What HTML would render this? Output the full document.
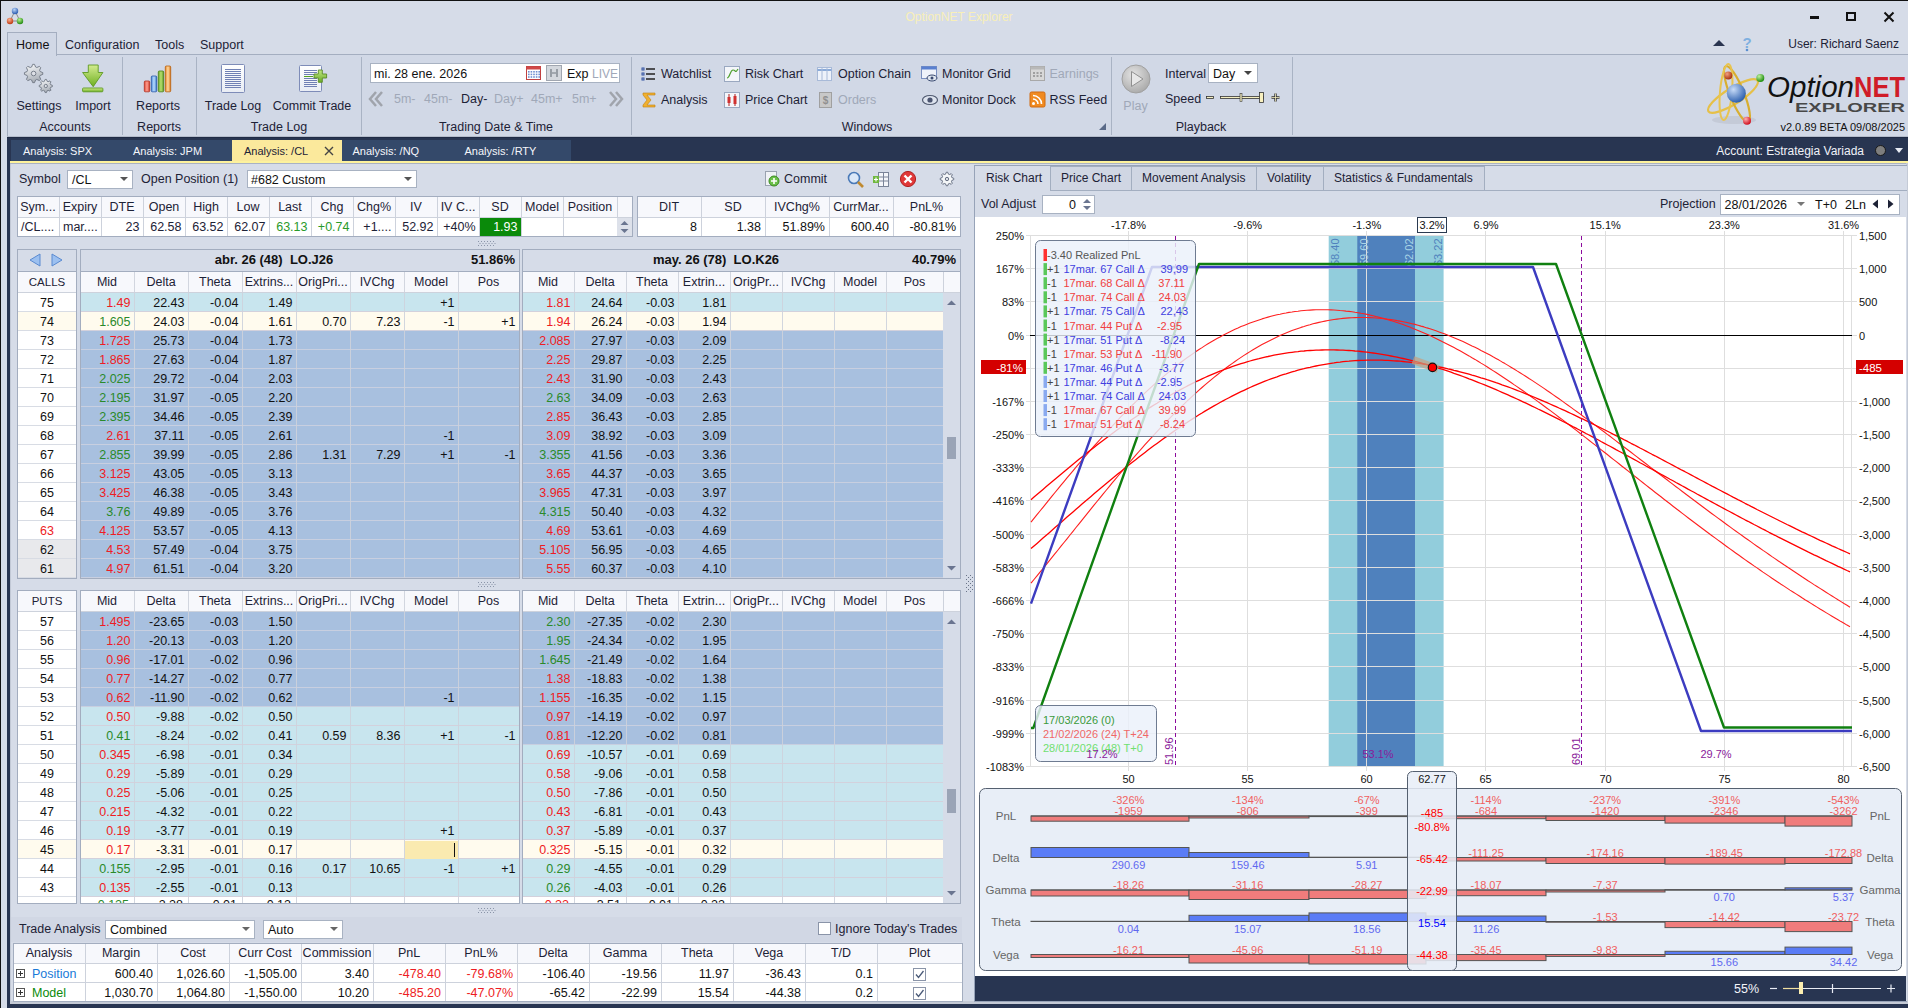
<!DOCTYPE html><html><head><meta charset="utf-8"><style>
html,body{margin:0;padding:0;}
body{width:1908px;height:1008px;position:relative;overflow:hidden;background:#d6dce8;font-family:"Liberation Sans", sans-serif;color:#1d2236;font-size:12px;}
div{position:absolute;box-sizing:border-box;}
.t{white-space:nowrap;}
svg{position:absolute;overflow:visible;}
</style></head><body>
<div style="left:0px;top:0px;width:1908px;height:1px;background:#111"></div>
<div style="left:0px;top:0px;width:1px;height:1008px;background:#111"></div>
<div class="t" style="left:809.0px;top:9.0px;width:300px;height:16px;line-height:16px;text-align:center;color:#f8efb8;font-size:12px">OptionNET Explorer</div>
<svg style="left:0;top:0" width="40" height="40">
<line x1="15" y1="11" x2="10" y2="21" stroke="#888" stroke-width="1"/><line x1="15" y1="11" x2="20" y2="21" stroke="#888" stroke-width="1"/><line x1="10" y1="21" x2="20" y2="21" stroke="#888" stroke-width="1"/>
<defs><radialGradient id="ib" cx="0.4" cy="0.3" r="0.7"><stop offset="0" stop-color="#b8d4f8"/><stop offset="1" stop-color="#2a5ab0"/></radialGradient><radialGradient id="ir" cx="0.4" cy="0.3" r="0.7"><stop offset="0" stop-color="#f8b090"/><stop offset="1" stop-color="#c03810"/></radialGradient><radialGradient id="ig" cx="0.4" cy="0.3" r="0.7"><stop offset="0" stop-color="#b8f090"/><stop offset="1" stop-color="#208a10"/></radialGradient></defs>
<circle cx="15" cy="11" r="3.2" fill="url(#ib)"/><circle cx="10" cy="21" r="3.2" fill="url(#ir)"/><circle cx="20" cy="21" r="3.2" fill="url(#ig)"/></svg>
<div style="left:1810px;top:16px;width:9px;height:3px;background:#111"></div>
<div style="left:1846px;top:12px;width:10px;height:9px;border:2px solid #111"></div>
<svg style="left:1880px;top:8px" width="18" height="18"><path d="M4.5 4.5 L13.5 13.5 M13.5 4.5 L4.5 13.5" stroke="#111" stroke-width="2"/></svg>
<div style="left:7px;top:54px;width:1901px;height:1px;background:#a4aec0"></div>
<div style="left:7px;top:55px;width:1901px;height:81px;background:#d1d8e6"></div>
<div style="left:7px;top:32px;width:50px;height:24px;border:1px solid #a4aec0;border-bottom:none;background:#d1d8e6"></div>
<div class="t" style="left:16px;top:36.5px;height:16px;line-height:16px;font-size:12.5px;color:#111">Home</div>
<div class="t" style="left:65px;top:36.5px;height:16px;line-height:16px;font-size:12.5px">Configuration</div>
<div class="t" style="left:155px;top:36.5px;height:16px;line-height:16px;font-size:12.5px">Tools</div>
<div class="t" style="left:200px;top:36.5px;height:16px;line-height:16px;font-size:12.5px">Support</div>
<svg style="left:1712px;top:38px" width="14" height="10"><path d="M1 8 L7 2 L13 8 Z" fill="#2a3550"/></svg>
<svg style="left:1738px;top:34px" width="18" height="18"><text x="9" y="14" font-family="Liberation Sans" font-size="15" font-weight="bold" fill="#7fb0e0" text-anchor="middle">?</text><circle cx="9" cy="16" r="1.3" fill="#5a8fd0"/></svg>
<div class="t" style="left:1499px;top:35.5px;width:400px;height:16px;line-height:16px;text-align:right;font-size:12px">User: Richard Saenz</div>
<div style="left:7px;top:55px;width:1px;height:82px;background:#a4aec0"></div>
<div style="left:122px;top:57px;width:1px;height:78px;background:#a9b3c4"></div>
<div style="left:196px;top:57px;width:1px;height:78px;background:#a9b3c4"></div>
<div style="left:361px;top:57px;width:1px;height:78px;background:#a9b3c4"></div>
<div style="left:631px;top:57px;width:1px;height:78px;background:#a9b3c4"></div>
<div style="left:1111px;top:57px;width:1px;height:78px;background:#a9b3c4"></div>
<div style="left:1292px;top:57px;width:1px;height:78px;background:#a9b3c4"></div>
<div class="t" style="left:-135.0px;top:118.5px;width:400px;height:16px;line-height:16px;text-align:center;font-size:12.5px">Accounts</div>
<div class="t" style="left:-41.0px;top:118.5px;width:400px;height:16px;line-height:16px;text-align:center;font-size:12.5px">Reports</div>
<div class="t" style="left:79.0px;top:118.5px;width:400px;height:16px;line-height:16px;text-align:center;font-size:12.5px">Trade Log</div>
<div class="t" style="left:296.0px;top:118.5px;width:400px;height:16px;line-height:16px;text-align:center;font-size:12.5px">Trading Date &amp; Time</div>
<div class="t" style="left:667.0px;top:118.5px;width:400px;height:16px;line-height:16px;text-align:center;font-size:12.5px">Windows</div>
<div class="t" style="left:1001.0px;top:118.5px;width:400px;height:16px;line-height:16px;text-align:center;font-size:12.5px">Playback</div>
<svg style="left:1098px;top:122px" width="10" height="10"><path d="M8 1 L8 8 L1 8 Z" fill="#5a6a88"/></svg>
<div class="t" style="left:-161.0px;top:97.5px;width:400px;height:16px;line-height:16px;text-align:center;font-size:12.5px">Settings</div>
<div class="t" style="left:-107.0px;top:97.5px;width:400px;height:16px;line-height:16px;text-align:center;font-size:12.5px">Import</div>
<div class="t" style="left:-42.0px;top:97.5px;width:400px;height:16px;line-height:16px;text-align:center;font-size:12.5px">Reports</div>
<div class="t" style="left:33.0px;top:97.5px;width:400px;height:16px;line-height:16px;text-align:center;font-size:12.5px">Trade Log</div>
<div class="t" style="left:112.0px;top:97.5px;width:400px;height:16px;line-height:16px;text-align:center;font-size:12.5px">Commit Trade</div>
<svg style="left:10px;top:56px" width="60" height="40" viewBox="10 56 60 40"><defs><linearGradient id="gg" x1="0" y1="0" x2="0.3" y2="1"><stop offset="0" stop-color="#fbfcfd"/><stop offset="1" stop-color="#aab0b8"/></linearGradient></defs><polygon points="42.76,72.60 42.76,74.40 40.11,75.48 39.60,76.71 40.71,79.34 39.44,80.61 36.81,79.50 35.58,80.01 34.50,82.66 32.70,82.66 31.62,80.01 30.39,79.50 27.76,80.61 26.49,79.34 27.60,76.71 27.09,75.48 24.44,74.40 24.44,72.60 27.09,71.52 27.60,70.29 26.49,67.66 27.76,66.39 30.39,67.50 31.62,66.99 32.70,64.34 34.50,64.34 35.58,66.99 36.81,67.50 39.44,66.39 40.71,67.66 39.60,70.29 40.11,71.52" fill="url(#gg)" stroke="#6e7682" stroke-width="0.9" stroke-linejoin="round"/><circle cx="33.6" cy="73.5" r="2.30" fill="#dde0e6" stroke="#6e7682" stroke-width="0.9"/><polygon points="52.37,85.35 52.37,86.65 50.47,87.42 50.11,88.30 50.90,90.19 49.99,91.10 48.10,90.31 47.22,90.67 46.45,92.57 45.15,92.57 44.38,90.67 43.50,90.31 41.61,91.10 40.70,90.19 41.49,88.30 41.13,87.42 39.23,86.65 39.23,85.35 41.13,84.58 41.49,83.70 40.70,81.81 41.61,80.90 43.50,81.69 44.38,81.33 45.15,79.43 46.45,79.43 47.22,81.33 48.10,81.69 49.99,80.90 50.90,81.81 50.11,83.70 50.47,84.58" fill="url(#gg)" stroke="#6e7682" stroke-width="0.9" stroke-linejoin="round"/><circle cx="45.8" cy="86" r="1.65" fill="#dde0e6" stroke="#6e7682" stroke-width="0.9"/></svg>
<svg style="left:70px;top:56px" width="50" height="40" viewBox="70 56 50 40"><defs><linearGradient id="ag" x1="0" y1="0" x2="0" y2="1"><stop offset="0" stop-color="#d4ec90"/><stop offset="1" stop-color="#6eb020"/></linearGradient></defs><path d="M88.3 65 H98.2 V72.5 H102.9 L93.2 86.7 L82.6 72.5 H88.3 Z" fill="url(#ag)" stroke="#5e9a22" stroke-width="0.9" stroke-linejoin="round"/><rect x="82.6" y="88" width="20.3" height="3.8" rx="0.8" fill="url(#ag)" stroke="#5e9a22" stroke-width="0.9"/></svg>
<svg style="left:130px;top:56px" width="50" height="40" viewBox="130 56 50 40"><defs><linearGradient id="rb1" x1="0" y1="0" x2="1" y2="0"><stop offset="0" stop-color="#e04838"/><stop offset="0.5" stop-color="#ffa090"/><stop offset="1" stop-color="#d03828"/></linearGradient><linearGradient id="rb2" x1="0" y1="0" x2="1" y2="0"><stop offset="0" stop-color="#4a88d8"/><stop offset="0.5" stop-color="#b8dcff"/><stop offset="1" stop-color="#3a78c8"/></linearGradient><linearGradient id="rb3" x1="0" y1="0" x2="1" y2="0"><stop offset="0" stop-color="#6aa828"/><stop offset="0.5" stop-color="#b8e070"/><stop offset="1" stop-color="#5a9820"/></linearGradient><linearGradient id="rb4" x1="0" y1="0" x2="1" y2="0"><stop offset="0" stop-color="#e88a28"/><stop offset="0.5" stop-color="#ffd8a0"/><stop offset="1" stop-color="#d87818"/></linearGradient></defs><rect x="144.3" y="81" width="5.4" height="10.8" rx="1" fill="url(#rb1)" stroke="#b03020" stroke-width="0.8"/><rect x="151.3" y="76" width="5.4" height="15.8" rx="1" fill="url(#rb2)" stroke="#2a58a8" stroke-width="0.8"/><rect x="158.3" y="71" width="5.4" height="20.8" rx="1" fill="url(#rb3)" stroke="#4a8018" stroke-width="0.8"/><rect x="165.3" y="66" width="5.4" height="25.8" rx="1" fill="url(#rb4)" stroke="#b86010" stroke-width="0.8"/></svg>
<svg style="left:218px;top:60px" width="30" height="36" viewBox="0 0 30 36"><defs><linearGradient id="dg" x1="0" y1="0" x2="0" y2="1"><stop offset="0" stop-color="#ffffff"/><stop offset="1" stop-color="#e8ecf4"/></linearGradient></defs><rect x="3.5" y="4.5" width="23" height="28" rx="1" fill="url(#dg)" stroke="#7e8cb8" stroke-width="1"/><rect x="7" y="9" width="16" height="1" fill="#7080b4"/><rect x="7" y="11" width="16" height="1" fill="#7080b4"/><rect x="7" y="13" width="16" height="1" fill="#7080b4"/><rect x="7" y="15" width="16" height="1" fill="#7080b4"/><rect x="7" y="17" width="16" height="1" fill="#7080b4"/><rect x="7" y="19" width="16" height="1" fill="#7080b4"/><rect x="7" y="21" width="16" height="1" fill="#7080b4"/><rect x="7" y="23" width="16" height="1" fill="#7080b4"/><rect x="7" y="25" width="16" height="1" fill="#7080b4"/><rect x="7" y="27" width="16" height="1" fill="#7080b4"/></svg>
<svg style="left:296px;top:60px" width="36" height="36" viewBox="0 0 36 36"><rect x="3.5" y="5.5" width="22" height="26" rx="1" fill="url(#dg)" stroke="#7e8cb8" stroke-width="1"/><rect x="8" y="10" width="13" height="1" fill="#7080b4"/><rect x="8" y="12" width="13" height="1" fill="#7080b4"/><rect x="8" y="14" width="13" height="1" fill="#7080b4"/><rect x="8" y="18" width="13" height="1" fill="#7080b4"/><rect x="8" y="20" width="13" height="1" fill="#7080b4"/><rect x="8" y="22" width="13" height="1" fill="#7080b4"/><rect x="8" y="24" width="13" height="1" fill="#7080b4"/><rect x="8" y="26" width="13" height="1" fill="#7080b4"/><rect x="8" y="16" width="9" height="1" fill="#50a020"/><defs><linearGradient id="pgr" x1="0" y1="0" x2="0" y2="1"><stop offset="0" stop-color="#c0e880"/><stop offset="1" stop-color="#6aaa28"/></linearGradient></defs><path d="M22.3 10 h4 v4 h4.3 v4 h-4.3 v4.3 h-4 v-4.3 h-4.3 v-4 h4.3 Z" fill="url(#pgr)" stroke="#5a8a28" stroke-width="0.9"/></svg>
<div style="left:370px;top:63px;width:250px;height:20px;background:#fff;border:1px solid #a8b2c2"></div>
<div class="t" style="left:374px;top:66.0px;height:16px;line-height:16px;font-size:12.5px;color:#111">mi. 28 ene. 2026</div>
<svg style="left:525px;top:65px" width="38" height="16" viewBox="0 0 38 16">
<rect x="1.5" y="1.5" width="14" height="13" fill="#fff" stroke="#c04040" stroke-width="1"/><rect x="1.5" y="1.5" width="14" height="3" fill="#d04848"/>
<g fill="#7090d0"><rect x="3.0" y="6.0" width="1.6" height="1.6"/><rect x="5.6" y="6.0" width="1.6" height="1.6"/><rect x="8.2" y="6.0" width="1.6" height="1.6"/><rect x="10.8" y="6.0" width="1.6" height="1.6"/><rect x="13.4" y="6.0" width="1.6" height="1.6"/><rect x="3.0" y="8.6" width="1.6" height="1.6"/><rect x="5.6" y="8.6" width="1.6" height="1.6"/><rect x="8.2" y="8.6" width="1.6" height="1.6"/><rect x="10.8" y="8.6" width="1.6" height="1.6"/><rect x="13.4" y="8.6" width="1.6" height="1.6"/><rect x="3.0" y="11.2" width="1.6" height="1.6"/><rect x="5.6" y="11.2" width="1.6" height="1.6"/><rect x="8.2" y="11.2" width="1.6" height="1.6"/><rect x="10.8" y="11.2" width="1.6" height="1.6"/><rect x="13.4" y="11.2" width="1.6" height="1.6"/></g>
<rect x="21.5" y="0.5" width="15" height="15" fill="#d4d8de" stroke="#a0a6b0" stroke-width="1"/>
<path d="M26 4 v8 M32 4 v8 M27 8 h4" stroke="#707880" stroke-width="1.2"/></svg>
<div class="t" style="left:567px;top:66.0px;height:16px;line-height:16px;font-size:12.5px;color:#111">Exp</div>
<div class="t" style="left:592px;top:66.0px;height:16px;line-height:16px;font-size:12px;color:#a0a8b8">LIVE</div>
<svg style="left:367px;top:90px" width="20" height="18"><path d="M9 2 L3 9 L9 16 M15 2 L9 9 L15 16" stroke="#a0a4ac" stroke-width="2.5" fill="none"/></svg>
<svg style="left:605px;top:90px" width="20" height="18"><path d="M5 2 L11 9 L5 16 M11 2 L17 9 L11 16" stroke="#a0a4ac" stroke-width="2.5" fill="none"/></svg>
<div class="t" style="left:394px;top:90.5px;height:16px;line-height:16px;font-size:12.5px;color:#a0a8b8">5m-</div>
<div class="t" style="left:424px;top:90.5px;height:16px;line-height:16px;font-size:12.5px;color:#a0a8b8">45m-</div>
<div class="t" style="left:461px;top:90.5px;height:16px;line-height:16px;font-size:12.5px;color:#1d2236">Day-</div>
<div class="t" style="left:494px;top:90.5px;height:16px;line-height:16px;font-size:12.5px;color:#a0a8b8">Day+</div>
<div class="t" style="left:531px;top:90.5px;height:16px;line-height:16px;font-size:12.5px;color:#a0a8b8">45m+</div>
<div class="t" style="left:572px;top:90.5px;height:16px;line-height:16px;font-size:12.5px;color:#a0a8b8">5m+</div>
<svg style="left:641px;top:65px" width="18" height="18" viewBox="0 0 18 18"><g stroke="#3050a0" stroke-width="1"><rect x="1" y="3" width="2" height="2" fill="none"/><rect x="1" y="8" width="2" height="2" fill="none"/><rect x="1" y="13" width="2" height="2" fill="none"/></g><g stroke="#222" stroke-width="1.5"><line x1="5" y1="4" x2="14" y2="4"/><line x1="5" y1="9" x2="14" y2="9"/><line x1="5" y1="14" x2="14" y2="14"/></g></svg>
<svg style="left:641px;top:91px" width="18" height="18" viewBox="0 0 18 18"><path d="M2 2 H14 V4 H6 L10 9 L6 14 H14 V16 H2 V14 L6 9 L2 4 Z" fill="#f0b030" stroke="#c08010" stroke-width="0.6"/></svg>
<svg style="left:724px;top:65px" width="18" height="18" viewBox="0 0 18 18"><rect x="0.5" y="1.5" width="15" height="15" fill="#f4f6fa" stroke="#9aa8c0"/><path d="M3 13 C6 13 6 5 9 5 C12 5 11 9 14 4" stroke="#50a030" stroke-width="1.2" fill="none"/></svg>
<svg style="left:724px;top:91px" width="18" height="18" viewBox="0 0 18 18"><rect x="0.5" y="1.5" width="15" height="15" fill="#f4f6fa" stroke="#9aa8c0"/><line x1="5" y1="3" x2="5" y2="15" stroke="#b02020"/><rect x="3.5" y="6" width="3" height="6" fill="#d03030"/><line x1="11" y1="3" x2="11" y2="15" stroke="#b02020"/><rect x="9.5" y="5" width="3" height="8" fill="#d03030"/></svg>
<svg style="left:816px;top:65px" width="18" height="18" viewBox="0 0 18 18"><rect x="1.5" y="2.5" width="14" height="13" fill="#eef2fa" stroke="#a8bad8"/><line x1="1.5" y1="5" x2="15.5" y2="5" stroke="#8aaad8" stroke-width="2"/><line x1="6" y1="3" x2="6" y2="15" stroke="#a8bad8"/><line x1="11" y1="3" x2="11" y2="15" stroke="#a8bad8"/></svg>
<svg style="left:817px;top:91px" width="18" height="18" viewBox="0 0 18 18"><rect x="2.5" y="1.5" width="12" height="15" fill="#c8c8c8" stroke="#a0a0a0"/><text x="8.5" y="13" font-size="10" text-anchor="middle" fill="#909090" font-family="Liberation Sans" font-weight="bold">$</text></svg>
<svg style="left:921px;top:65px" width="18" height="18" viewBox="0 0 18 18"><rect x="0.5" y="1.5" width="15" height="12" fill="#eef2fa" stroke="#7a90c0"/><rect x="0.5" y="1.5" width="15" height="3" fill="#5a80d0"/><ellipse cx="11" cy="13" rx="5" ry="3" fill="#dfe6f0" stroke="#3a4a70"/><circle cx="11" cy="13" r="1.5" fill="#3a4a70"/></svg>
<svg style="left:921px;top:91px" width="18" height="18" viewBox="0 0 18 18"><ellipse cx="9" cy="9" rx="7.5" ry="4.5" fill="#dde3ee" stroke="#505a70" stroke-width="1.2"/><circle cx="9" cy="9" r="2.6" fill="#4a5470"/></svg>
<svg style="left:1029px;top:65px" width="18" height="18" viewBox="0 0 18 18"><rect x="1.5" y="1.5" width="14" height="14" fill="#d8d8d8" stroke="#a8a8a8"/><rect x="1.5" y="1.5" width="14" height="3" fill="#b8b8b8"/><g fill="#a0a0a0"><rect x="4.0" y="7" width="2" height="2"/><rect x="7.5" y="7" width="2" height="2"/><rect x="11.0" y="7" width="2" height="2"/><rect x="4.0" y="10" width="2" height="2"/><rect x="7.5" y="10" width="2" height="2"/><rect x="11.0" y="10" width="2" height="2"/></g></svg>
<svg style="left:1029px;top:91px" width="18" height="18" viewBox="0 0 18 18"><rect x="1" y="1" width="15" height="15" rx="1.5" fill="#f08a20" stroke="#d06a10"/><circle cx="4.5" cy="12.5" r="1.5" fill="#fff"/><path d="M4 8 A5 5 0 0 1 9 13" stroke="#fff" stroke-width="1.6" fill="none"/><path d="M4 4.5 A8.5 8.5 0 0 1 12.5 13" stroke="#fff" stroke-width="1.6" fill="none"/></svg>
<div class="t" style="left:661px;top:65.5px;height:16px;line-height:16px;font-size:12.5px;color:#1d2236">Watchlist</div>
<div class="t" style="left:661px;top:91.5px;height:16px;line-height:16px;font-size:12.5px;color:#1d2236">Analysis</div>
<div class="t" style="left:745px;top:65.5px;height:16px;line-height:16px;font-size:12.5px;color:#1d2236">Risk Chart</div>
<div class="t" style="left:745px;top:91.5px;height:16px;line-height:16px;font-size:12.5px;color:#1d2236">Price Chart</div>
<div class="t" style="left:838px;top:65.5px;height:16px;line-height:16px;font-size:12.5px;color:#1d2236">Option Chain</div>
<div class="t" style="left:838px;top:91.5px;height:16px;line-height:16px;font-size:12.5px;color:#a0a8b8">Orders</div>
<div class="t" style="left:942px;top:65.5px;height:16px;line-height:16px;font-size:12.5px;color:#1d2236">Monitor Grid</div>
<div class="t" style="left:942px;top:91.5px;height:16px;line-height:16px;font-size:12.5px;color:#1d2236">Monitor Dock</div>
<div class="t" style="left:1049.5px;top:65.5px;height:16px;line-height:16px;font-size:12.5px;color:#a0a8b8">Earnings</div>
<div class="t" style="left:1049.5px;top:91.5px;height:16px;line-height:16px;font-size:12.5px;color:#1d2236">RSS Feed</div>
<svg style="left:1120px;top:63px" width="32" height="32" viewBox="0 0 32 32">
<defs><radialGradient id="pg" cx="0.4" cy="0.35" r="0.7"><stop offset="0" stop-color="#e4e4e4"/><stop offset="1" stop-color="#a8a8a8"/></radialGradient></defs>
<circle cx="16" cy="16" r="14" fill="url(#pg)" stroke="#a0a0a0"/><path d="M11.5 8.5 L23 16 L11.5 23.5 Z" fill="#e8e8e8" stroke="#909090"/></svg>
<div class="t" style="left:935.5px;top:98.0px;width:400px;height:16px;line-height:16px;text-align:center;font-size:12.5px;color:#a0a8b8">Play</div>
<div class="t" style="left:1165px;top:65.5px;height:16px;line-height:16px;font-size:12.5px">Interval</div>
<div style="left:1208px;top:63px;width:50px;height:20px;background:#fff;border:1px solid #a8b2c2"></div>
<div class="t" style="left:1213px;top:65.5px;height:16px;line-height:16px;font-size:12.5px;color:#111">Day</div>
<svg style="left:1243px;top:69px" width="10" height="8"><path d="M1 2 L9 2 L5 6 Z" fill="#444"/></svg>
<div class="t" style="left:1165px;top:90.5px;height:16px;line-height:16px;font-size:12.5px">Speed</div>
<svg style="left:1204px;top:90px" width="80" height="16" viewBox="0 0 80 16">
<rect x="2.5" y="6.5" width="7" height="2" fill="#f4eec0" stroke="#333" stroke-width="0.8"/>
<rect x="16.5" y="6.5" width="43" height="2" fill="#f4eec0" stroke="#333" stroke-width="0.8"/>
<rect x="36" y="3.5" width="2" height="8" fill="#f4eec0" stroke="#333" stroke-width="0.6"/>
<rect x="55.5" y="2.5" width="4" height="10" fill="#f8f0c0" stroke="#333" stroke-width="0.8"/>
<path d="M67.5 7.5 h8 M71.5 3.5 v8" stroke="#333" stroke-width="2.4"/><path d="M67.5 7.5 h8 M71.5 3.5 v8" stroke="#f4eec0" stroke-width="0.8"/></svg>
<svg style="left:1700px;top:58px" width="70" height="72" viewBox="0 0 70 72">
<defs><radialGradient id="ab" cx="0.35" cy="0.3" r="0.7"><stop offset="0" stop-color="#c8dcf8"/><stop offset="1" stop-color="#2f62b0"/></radialGradient>
<radialGradient id="ar" cx="0.35" cy="0.3" r="0.7"><stop offset="0" stop-color="#f0a080"/><stop offset="1" stop-color="#a83010"/></radialGradient>
<radialGradient id="ar2" cx="0.35" cy="0.3" r="0.7"><stop offset="0" stop-color="#ffb0b0"/><stop offset="1" stop-color="#d01020"/></radialGradient>
<radialGradient id="agr" cx="0.35" cy="0.3" r="0.7"><stop offset="0" stop-color="#c0f0a0"/><stop offset="1" stop-color="#209010"/></radialGradient></defs>
<ellipse cx="34" cy="62" rx="22" ry="4" fill="#b8bcc8" opacity="0.5"/>
<ellipse cx="33" cy="38" rx="29" ry="8" transform="rotate(-32 33 38)" fill="none" stroke="#e6c048" stroke-width="2.2"/>
<ellipse cx="37" cy="36" rx="30" ry="7" transform="rotate(68 37 36)" fill="none" stroke="#d8ae30" stroke-width="2.2"/>
<ellipse cx="26" cy="34" rx="28" ry="6" transform="rotate(95 26 34)" fill="none" stroke="#e8c450" stroke-width="2"/>
<circle cx="36.3" cy="35.3" r="9.5" fill="url(#ab)"/><circle cx="28.3" cy="17.6" r="4" fill="url(#ar)"/><circle cx="60.3" cy="20" r="4" fill="url(#agr)"/><circle cx="47" cy="62.7" r="4" fill="url(#ar2)"/></svg>
<svg style="left:1760px;top:64px" width="150" height="70" viewBox="0 0 150 70">
<text x="7" y="33.3" font-family="Liberation Sans" font-style="italic" font-size="30" fill="#111" textLength="87" lengthAdjust="spacingAndGlyphs">Option</text>
<text x="94" y="33.3" font-family="Liberation Sans" font-size="29" font-weight="bold" fill="#d01c28" textLength="51" lengthAdjust="spacingAndGlyphs">NET</text>
<text x="35" y="47.6" font-family="Liberation Sans" font-size="12.5" font-weight="bold" fill="#484848" textLength="110" lengthAdjust="spacingAndGlyphs">EXPLORER</text>
</svg>
<div class="t" style="left:1505px;top:119.0px;width:400px;height:16px;line-height:16px;text-align:right;font-size:11px;color:#111">v2.0.89 BETA 09/08/2025</div>
<div style="left:7px;top:136px;width:1901px;height:1px;background:#b4bccb"></div>
<div style="left:7px;top:137px;width:1901px;height:24px;background:#283551"></div>
<div style="left:7px;top:137px;width:1901px;height:1px;background:#202b45"></div>
<div style="left:11px;top:140px;width:560px;height:21px;background:#34496a"></div>
<div style="left:232px;top:140px;width:110px;height:21px;background:#fbe99c"></div>
<div class="t" style="left:23px;top:142.5px;height:16px;line-height:16px;font-size:11px;color:#f4f6fb">Analysis: SPX</div>
<div class="t" style="left:133px;top:142.5px;height:16px;line-height:16px;font-size:11px;color:#f4f6fb">Analysis: JPM</div>
<div class="t" style="left:352.5px;top:142.5px;height:16px;line-height:16px;font-size:11px;color:#f4f6fb">Analysis: /NQ</div>
<div class="t" style="left:464.5px;top:142.5px;height:16px;line-height:16px;font-size:11px;color:#f4f6fb">Analysis: /RTY</div>
<div class="t" style="left:244px;top:142.5px;height:16px;line-height:16px;font-size:11px;color:#1d2236">Analysis: /CL</div>
<svg style="left:323px;top:145px" width="12" height="12"><path d="M2 2 L10 10 M10 2 L2 10" stroke="#444" stroke-width="1.4"/></svg>
<div class="t" style="left:1464px;top:142.5px;width:400px;height:16px;line-height:16px;text-align:right;font-size:12px;color:#f0f2f8">Account: Estrategia Variada</div>
<svg style="left:1872px;top:143px" width="36" height="16"><circle cx="8.5" cy="7.5" r="5" fill="#7e7e7e" stroke="#1a1a1a"/><path d="M23 5 L31 5 L27 10 Z" fill="#e8ecf4"/></svg>
<div style="left:10px;top:161px;width:1898px;height:2px;background:#fdf29c"></div>
<div style="left:10px;top:163px;width:1898px;height:1px;background:#a9b2c3"></div>
<div style="left:7px;top:161px;width:3px;height:847px;background:#283551"></div>
<div style="left:7px;top:1004px;width:1901px;height:4px;background:#283551"></div>
<div style="left:10px;top:1001px;width:1898px;height:3px;background:#c4cad6"></div>
<div style="left:1906px;top:163px;width:2px;height:841px;background:#c4cad6"></div>
<div style="left:10px;top:164px;width:952px;height:837px;background:#d6dce8"></div>
<div style="left:10px;top:164px;width:1px;height:837px;background:#c2c9d6"></div>
<div class="t" style="left:19px;top:171.0px;height:16px;line-height:16px;font-size:12.5px">Symbol</div>
<div style="left:67px;top:170px;width:66px;height:19px;background:#fff;border:1px solid #a8b2c2"></div>
<div class="t" style="left:72px;top:172.0px;height:16px;line-height:16px;font-size:12.5px;color:#111">/CL</div>
<svg style="left:119px;top:175px" width="10" height="8"><path d="M1 2 L9 2 L5 6 Z" fill="#555"/></svg>
<div class="t" style="left:141px;top:171.0px;height:16px;line-height:16px;font-size:12.5px">Open Position (1)</div>
<div style="left:247px;top:170px;width:170px;height:18px;background:#fff;border:1px solid #a8b2c2"></div>
<div class="t" style="left:251px;top:171.5px;height:16px;line-height:16px;font-size:12.5px;color:#111">#682 Custom</div>
<svg style="left:403px;top:175px" width="10" height="8"><path d="M1 2 L9 2 L5 6 Z" fill="#555"/></svg>
<svg style="left:764px;top:170px" width="18" height="18" viewBox="0 0 18 18"><rect x="1.5" y="1.5" width="11" height="14" fill="#f0f2f6" stroke="#9aa2b0"/>
<circle cx="10" cy="11" r="5" fill="#6cc04a" stroke="#3a8a20"/><path d="M7 11 h6 M10 8 v6" stroke="#fff" stroke-width="1.6"/></svg>
<div class="t" style="left:784px;top:171.0px;height:16px;line-height:16px;font-size:12.5px">Commit</div>
<svg style="left:846px;top:170px" width="20" height="20" viewBox="0 0 20 20"><circle cx="8" cy="8" r="5.5" fill="#dbe8f8" stroke="#4a7ab8" stroke-width="1.6"/><path d="M12 12 L17 17" stroke="#c08a30" stroke-width="2.6"/></svg>
<svg style="left:872px;top:171px" width="18" height="18" viewBox="0 0 18 18"><rect x="6.5" y="1.5" width="10" height="14" fill="#f4f6fa" stroke="#7a8498"/><path d="M11.5 2 v13 M7 6 h9 M7 10 h9" stroke="#7a8498"/><rect x="1" y="5" width="6" height="7" fill="#70b840"/><path d="M2 8.5 h4 M4 6.5 v4" stroke="#fff" stroke-width="1.2"/></svg>
<svg style="left:899px;top:170px" width="18" height="18" viewBox="0 0 18 18"><circle cx="9" cy="9" r="7.6" fill="#e03838" stroke="#b02020"/><path d="M5.5 5.5 L12.5 12.5 M12.5 5.5 L5.5 12.5" stroke="#fff" stroke-width="2.4"/></svg>
<svg style="left:937px;top:170px" width="20" height="20" viewBox="0 0 20 20"><polygon points="16.77,8.33 16.77,9.67 14.82,10.46 14.44,11.37 15.26,13.31 14.31,14.26 12.37,13.44 11.46,13.82 10.67,15.77 9.33,15.77 8.54,13.82 7.63,13.44 5.69,14.26 4.74,13.31 5.56,11.37 5.18,10.46 3.23,9.67 3.23,8.33 5.18,7.54 5.56,6.63 4.74,4.69 5.69,3.74 7.63,4.56 8.54,4.18 9.33,2.23 10.67,2.23 11.46,4.18 12.37,4.56 14.31,3.74 15.26,4.69 14.44,6.63 14.82,7.54" fill="#f4f6f8" stroke="#5a6478" stroke-width="0.9" stroke-linejoin="round"/><circle cx="10" cy="9" r="1.70" fill="#dde0e6" stroke="#5a6478" stroke-width="0.9"/></svg>
<div style="left:17px;top:196px;width:616px;height:41px;border:1px solid #a3adbf;background:#fff"></div>
<div style="left:18px;top:197px;width:614px;height:20px;background:#f7f8fc"></div>
<div style="left:18px;top:217px;width:614px;height:1px;background:#cdd2dc"></div>
<div style="left:59px;top:197px;width:1px;height:39px;background:#cdd2dc"></div>
<div style="left:101px;top:197px;width:1px;height:39px;background:#cdd2dc"></div>
<div style="left:143px;top:197px;width:1px;height:39px;background:#cdd2dc"></div>
<div style="left:185px;top:197px;width:1px;height:39px;background:#cdd2dc"></div>
<div style="left:227px;top:197px;width:1px;height:39px;background:#cdd2dc"></div>
<div style="left:269px;top:197px;width:1px;height:39px;background:#cdd2dc"></div>
<div style="left:311px;top:197px;width:1px;height:39px;background:#cdd2dc"></div>
<div style="left:353px;top:197px;width:1px;height:39px;background:#cdd2dc"></div>
<div style="left:395px;top:197px;width:1px;height:39px;background:#cdd2dc"></div>
<div style="left:437px;top:197px;width:1px;height:39px;background:#cdd2dc"></div>
<div style="left:479px;top:197px;width:1px;height:39px;background:#cdd2dc"></div>
<div style="left:521px;top:197px;width:1px;height:39px;background:#cdd2dc"></div>
<div style="left:563px;top:197px;width:1px;height:39px;background:#cdd2dc"></div>
<div style="left:617px;top:197px;width:1px;height:39px;background:#cdd2dc"></div>
<div class="t" style="left:8.0px;top:199.0px;width:60px;height:16px;line-height:16px;text-align:center;font-size:12.5px">Sym...</div>
<div class="t" style="left:50.0px;top:199.0px;width:60px;height:16px;line-height:16px;text-align:center;font-size:12.5px">Expiry</div>
<div class="t" style="left:92.0px;top:199.0px;width:60px;height:16px;line-height:16px;text-align:center;font-size:12.5px">DTE</div>
<div class="t" style="left:134.0px;top:199.0px;width:60px;height:16px;line-height:16px;text-align:center;font-size:12.5px">Open</div>
<div class="t" style="left:176.0px;top:199.0px;width:60px;height:16px;line-height:16px;text-align:center;font-size:12.5px">High</div>
<div class="t" style="left:218.0px;top:199.0px;width:60px;height:16px;line-height:16px;text-align:center;font-size:12.5px">Low</div>
<div class="t" style="left:260.0px;top:199.0px;width:60px;height:16px;line-height:16px;text-align:center;font-size:12.5px">Last</div>
<div class="t" style="left:302.0px;top:199.0px;width:60px;height:16px;line-height:16px;text-align:center;font-size:12.5px">Chg</div>
<div class="t" style="left:344.0px;top:199.0px;width:60px;height:16px;line-height:16px;text-align:center;font-size:12.5px">Chg%</div>
<div class="t" style="left:386.0px;top:199.0px;width:60px;height:16px;line-height:16px;text-align:center;font-size:12.5px">IV</div>
<div class="t" style="left:428.0px;top:199.0px;width:60px;height:16px;line-height:16px;text-align:center;font-size:12.5px">IV C...</div>
<div class="t" style="left:470.0px;top:199.0px;width:60px;height:16px;line-height:16px;text-align:center;font-size:12.5px">SD</div>
<div class="t" style="left:512.0px;top:199.0px;width:60px;height:16px;line-height:16px;text-align:center;font-size:12.5px">Model</div>
<div class="t" style="left:560.0px;top:199.0px;width:60px;height:16px;line-height:16px;text-align:center;font-size:12.5px">Position</div>
<div style="left:480px;top:218px;width:41px;height:18px;background:#0a8a0a"></div>
<div class="t" style="left:21px;top:219.0px;height:16px;line-height:16px;font-size:12.5px;color:#1d2236">/CL....</div>
<div class="t" style="left:63px;top:219.0px;height:16px;line-height:16px;font-size:12.5px;color:#1d2236">mar....</div>
<div class="t" style="left:-260.5px;top:219.0px;width:400px;height:16px;line-height:16px;text-align:right;font-size:12.5px;color:#1d2236">23</div>
<div class="t" style="left:-218.5px;top:219.0px;width:400px;height:16px;line-height:16px;text-align:right;font-size:12.5px;color:#1d2236">62.58</div>
<div class="t" style="left:-176.5px;top:219.0px;width:400px;height:16px;line-height:16px;text-align:right;font-size:12.5px;color:#1d2236">63.52</div>
<div class="t" style="left:-134.5px;top:219.0px;width:400px;height:16px;line-height:16px;text-align:right;font-size:12.5px;color:#1d2236">62.07</div>
<div class="t" style="left:-92.5px;top:219.0px;width:400px;height:16px;line-height:16px;text-align:right;font-size:12.5px;color:#2a9a2a">63.13</div>
<div class="t" style="left:-50.5px;top:219.0px;width:400px;height:16px;line-height:16px;text-align:right;font-size:12.5px;color:#2a9a2a">+0.74</div>
<div class="t" style="left:-8.5px;top:219.0px;width:400px;height:16px;line-height:16px;text-align:right;font-size:12.5px;color:#1d2236">+1....</div>
<div class="t" style="left:33.5px;top:219.0px;width:400px;height:16px;line-height:16px;text-align:right;font-size:12.5px;color:#1d2236">52.92</div>
<div class="t" style="left:75.5px;top:219.0px;width:400px;height:16px;line-height:16px;text-align:right;font-size:12.5px;color:#1d2236">+40%</div>
<div class="t" style="left:117.5px;top:219.0px;width:400px;height:16px;line-height:16px;text-align:right;font-size:12.5px;color:#fff">1.93</div>
<div class="t" style="left:159.5px;top:219.0px;width:400px;height:16px;line-height:16px;text-align:right;font-size:12.5px;color:#1d2236"></div>
<div class="t" style="left:213.5px;top:219.0px;width:400px;height:16px;line-height:16px;text-align:right;font-size:12.5px;color:#1d2236"></div>
<div style="left:617px;top:218px;width:15px;height:18px;background:#dde1ea"></div>
<svg style="left:617px;top:218px" width="15" height="18"><path d="M3.5 7 L7.5 3 L11.5 7 Z M3.5 11 L11.5 11 L7.5 15 Z" fill="#6a7590"/></svg>
<div style="left:637px;top:196px;width:324px;height:41px;border:1px solid #a3adbf;background:#fff"></div>
<div style="left:638px;top:197px;width:322px;height:20px;background:#f7f8fc"></div>
<div style="left:638px;top:217px;width:322px;height:1px;background:#cdd2dc"></div>
<div style="left:701px;top:197px;width:1px;height:39px;background:#cdd2dc"></div>
<div style="left:765px;top:197px;width:1px;height:39px;background:#cdd2dc"></div>
<div style="left:829px;top:197px;width:1px;height:39px;background:#cdd2dc"></div>
<div style="left:893px;top:197px;width:1px;height:39px;background:#cdd2dc"></div>
<div class="t" style="left:637.0px;top:199.0px;width:64px;height:16px;line-height:16px;text-align:center;font-size:12.5px">DIT</div>
<div class="t" style="left:297px;top:219.0px;width:400px;height:16px;line-height:16px;text-align:right;font-size:12.5px;color:#111">8</div>
<div class="t" style="left:701.0px;top:199.0px;width:64px;height:16px;line-height:16px;text-align:center;font-size:12.5px">SD</div>
<div class="t" style="left:361px;top:219.0px;width:400px;height:16px;line-height:16px;text-align:right;font-size:12.5px;color:#111">1.38</div>
<div class="t" style="left:765.0px;top:199.0px;width:64px;height:16px;line-height:16px;text-align:center;font-size:12.5px">IVChg%</div>
<div class="t" style="left:425px;top:219.0px;width:400px;height:16px;line-height:16px;text-align:right;font-size:12.5px;color:#111">51.89%</div>
<div class="t" style="left:829.0px;top:199.0px;width:64px;height:16px;line-height:16px;text-align:center;font-size:12.5px">CurrMar...</div>
<div class="t" style="left:489px;top:219.0px;width:400px;height:16px;line-height:16px;text-align:right;font-size:12.5px;color:#111">600.40</div>
<div class="t" style="left:894.5px;top:199.0px;width:64px;height:16px;line-height:16px;text-align:center;font-size:12.5px">PnL%</div>
<div class="t" style="left:556px;top:219.0px;width:400px;height:16px;line-height:16px;text-align:right;font-size:12.5px;color:#111">-80.81%</div>
<svg style="left:478px;top:241px" width="20" height="6"><g fill="#8a94a8"><rect x="0.0" y="0" width="1" height="1"/><rect x="3.0" y="0" width="1" height="1"/><rect x="6.0" y="0" width="1" height="1"/><rect x="9.0" y="0" width="1" height="1"/><rect x="12.0" y="0" width="1" height="1"/><rect x="15.0" y="0" width="1" height="1"/><rect x="1.5" y="2" width="1" height="1"/><rect x="4.5" y="2" width="1" height="1"/><rect x="7.5" y="2" width="1" height="1"/><rect x="10.5" y="2" width="1" height="1"/><rect x="13.5" y="2" width="1" height="1"/><rect x="16.5" y="2" width="1" height="1"/><rect x="0.0" y="4" width="1" height="1"/><rect x="3.0" y="4" width="1" height="1"/><rect x="6.0" y="4" width="1" height="1"/><rect x="9.0" y="4" width="1" height="1"/><rect x="12.0" y="4" width="1" height="1"/><rect x="15.0" y="4" width="1" height="1"/></g></svg>
<svg style="left:478px;top:582px" width="20" height="6"><g fill="#8a94a8"><rect x="0.0" y="0" width="1" height="1"/><rect x="3.0" y="0" width="1" height="1"/><rect x="6.0" y="0" width="1" height="1"/><rect x="9.0" y="0" width="1" height="1"/><rect x="12.0" y="0" width="1" height="1"/><rect x="15.0" y="0" width="1" height="1"/><rect x="1.5" y="2" width="1" height="1"/><rect x="4.5" y="2" width="1" height="1"/><rect x="7.5" y="2" width="1" height="1"/><rect x="10.5" y="2" width="1" height="1"/><rect x="13.5" y="2" width="1" height="1"/><rect x="16.5" y="2" width="1" height="1"/><rect x="0.0" y="4" width="1" height="1"/><rect x="3.0" y="4" width="1" height="1"/><rect x="6.0" y="4" width="1" height="1"/><rect x="9.0" y="4" width="1" height="1"/><rect x="12.0" y="4" width="1" height="1"/><rect x="15.0" y="4" width="1" height="1"/></g></svg>
<svg style="left:478px;top:908px" width="20" height="6"><g fill="#8a94a8"><rect x="0.0" y="0" width="1" height="1"/><rect x="3.0" y="0" width="1" height="1"/><rect x="6.0" y="0" width="1" height="1"/><rect x="9.0" y="0" width="1" height="1"/><rect x="12.0" y="0" width="1" height="1"/><rect x="15.0" y="0" width="1" height="1"/><rect x="1.5" y="2" width="1" height="1"/><rect x="4.5" y="2" width="1" height="1"/><rect x="7.5" y="2" width="1" height="1"/><rect x="10.5" y="2" width="1" height="1"/><rect x="13.5" y="2" width="1" height="1"/><rect x="16.5" y="2" width="1" height="1"/><rect x="0.0" y="4" width="1" height="1"/><rect x="3.0" y="4" width="1" height="1"/><rect x="6.0" y="4" width="1" height="1"/><rect x="9.0" y="4" width="1" height="1"/><rect x="12.0" y="4" width="1" height="1"/><rect x="15.0" y="4" width="1" height="1"/></g></svg>
<div style="left:17px;top:249px;width:60px;height:330px;border:1px solid #a3adbf;background:#fff"></div>
<div style="left:18px;top:250px;width:58px;height:21px;background:#d6dce8"></div>
<div style="left:18px;top:271px;width:58px;height:1px;background:#a3adbf"></div>
<svg style="left:26px;top:252px" width="40" height="16"><path d="M14 2 L4 8 L14 14 Z" fill="#9cc0f0" stroke="#5a8ad0"/><path d="M26 2 L36 8 L26 14 Z" fill="#9cc0f0" stroke="#5a8ad0"/></svg>
<div style="left:18px;top:272px;width:58px;height:20px;background:#f7f8fc"></div>
<div style="left:18px;top:292px;width:58px;height:1px;background:#cdd2dc"></div>
<div class="t" style="left:18.0px;top:273.5px;width:58px;height:16px;line-height:16px;text-align:center;font-size:11.5px">CALLS</div>
<div style="left:18px;top:293px;width:58px;height:19px;background:#ffffff"></div>
<div style="left:18px;top:311px;width:58px;height:1px;background:#d8dce4"></div>
<div class="t" style="left:18.0px;top:294.5px;width:58px;height:16px;line-height:16px;text-align:center;font-size:12.5px;color:#111">75</div>
<div style="left:18px;top:312px;width:58px;height:19px;background:#fffbee"></div>
<div style="left:18px;top:330px;width:58px;height:1px;background:#d8dce4"></div>
<div class="t" style="left:18.0px;top:313.5px;width:58px;height:16px;line-height:16px;text-align:center;font-size:12.5px;color:#111">74</div>
<div style="left:18px;top:331px;width:58px;height:19px;background:#ffffff"></div>
<div style="left:18px;top:349px;width:58px;height:1px;background:#d8dce4"></div>
<div class="t" style="left:18.0px;top:332.5px;width:58px;height:16px;line-height:16px;text-align:center;font-size:12.5px;color:#111">73</div>
<div style="left:18px;top:350px;width:58px;height:19px;background:#ffffff"></div>
<div style="left:18px;top:368px;width:58px;height:1px;background:#d8dce4"></div>
<div class="t" style="left:18.0px;top:351.5px;width:58px;height:16px;line-height:16px;text-align:center;font-size:12.5px;color:#111">72</div>
<div style="left:18px;top:369px;width:58px;height:19px;background:#ffffff"></div>
<div style="left:18px;top:387px;width:58px;height:1px;background:#d8dce4"></div>
<div class="t" style="left:18.0px;top:370.5px;width:58px;height:16px;line-height:16px;text-align:center;font-size:12.5px;color:#111">71</div>
<div style="left:18px;top:388px;width:58px;height:19px;background:#ffffff"></div>
<div style="left:18px;top:406px;width:58px;height:1px;background:#d8dce4"></div>
<div class="t" style="left:18.0px;top:389.5px;width:58px;height:16px;line-height:16px;text-align:center;font-size:12.5px;color:#111">70</div>
<div style="left:18px;top:407px;width:58px;height:19px;background:#ffffff"></div>
<div style="left:18px;top:425px;width:58px;height:1px;background:#d8dce4"></div>
<div class="t" style="left:18.0px;top:408.5px;width:58px;height:16px;line-height:16px;text-align:center;font-size:12.5px;color:#111">69</div>
<div style="left:18px;top:426px;width:58px;height:19px;background:#ffffff"></div>
<div style="left:18px;top:444px;width:58px;height:1px;background:#d8dce4"></div>
<div class="t" style="left:18.0px;top:427.5px;width:58px;height:16px;line-height:16px;text-align:center;font-size:12.5px;color:#111">68</div>
<div style="left:18px;top:445px;width:58px;height:19px;background:#ffffff"></div>
<div style="left:18px;top:463px;width:58px;height:1px;background:#d8dce4"></div>
<div class="t" style="left:18.0px;top:446.5px;width:58px;height:16px;line-height:16px;text-align:center;font-size:12.5px;color:#111">67</div>
<div style="left:18px;top:464px;width:58px;height:19px;background:#ffffff"></div>
<div style="left:18px;top:482px;width:58px;height:1px;background:#d8dce4"></div>
<div class="t" style="left:18.0px;top:465.5px;width:58px;height:16px;line-height:16px;text-align:center;font-size:12.5px;color:#111">66</div>
<div style="left:18px;top:483px;width:58px;height:19px;background:#ffffff"></div>
<div style="left:18px;top:501px;width:58px;height:1px;background:#d8dce4"></div>
<div class="t" style="left:18.0px;top:484.5px;width:58px;height:16px;line-height:16px;text-align:center;font-size:12.5px;color:#111">65</div>
<div style="left:18px;top:502px;width:58px;height:19px;background:#ffffff"></div>
<div style="left:18px;top:520px;width:58px;height:1px;background:#d8dce4"></div>
<div class="t" style="left:18.0px;top:503.5px;width:58px;height:16px;line-height:16px;text-align:center;font-size:12.5px;color:#111">64</div>
<div style="left:18px;top:521px;width:58px;height:19px;background:#ffffff"></div>
<div style="left:18px;top:539px;width:58px;height:1px;background:#d8dce4"></div>
<div class="t" style="left:18.0px;top:522.5px;width:58px;height:16px;line-height:16px;text-align:center;font-size:12.5px;color:#ee1c24">63</div>
<div style="left:18px;top:540px;width:58px;height:19px;background:#e8e9ec"></div>
<div style="left:18px;top:558px;width:58px;height:1px;background:#d8dce4"></div>
<div class="t" style="left:18.0px;top:541.5px;width:58px;height:16px;line-height:16px;text-align:center;font-size:12.5px;color:#111">62</div>
<div style="left:18px;top:559px;width:58px;height:19px;background:#e8e9ec"></div>
<div style="left:18px;top:577px;width:58px;height:1px;background:#d8dce4"></div>
<div class="t" style="left:18.0px;top:560.5px;width:58px;height:16px;line-height:16px;text-align:center;font-size:12.5px;color:#111">61</div>
<div style="left:80px;top:249px;width:440px;height:330px;border:1px solid #a3adbf;background:#d6dce8"></div>
<div class="t" style="left:124.0px;top:252.0px;width:300px;height:16px;line-height:16px;text-align:center;font-size:13px;font-weight:bold;color:#111">abr. 26 (48)&nbsp; LO.J26</div>
<div class="t" style="left:115px;top:252.0px;width:400px;height:16px;line-height:16px;text-align:right;font-size:13px;font-weight:bold;color:#111">51.86%</div>
<div style="left:81px;top:271px;width:438px;height:1px;background:#a3adbf"></div>
<div style="left:81px;top:272px;width:438px;height:20px;background:#f7f8fc"></div>
<div style="left:81px;top:292px;width:438px;height:1px;background:#cdd2dc"></div>
<div class="t" style="left:80.0px;top:273.5px;width:54px;height:16px;line-height:16px;text-align:center;font-size:12.5px">Mid</div>
<div class="t" style="left:134.0px;top:273.5px;width:54px;height:16px;line-height:16px;text-align:center;font-size:12.5px">Delta</div>
<div class="t" style="left:188.0px;top:273.5px;width:54px;height:16px;line-height:16px;text-align:center;font-size:12.5px">Theta</div>
<div class="t" style="left:242.0px;top:273.5px;width:54px;height:16px;line-height:16px;text-align:center;font-size:12.5px">Extrins...</div>
<div class="t" style="left:296.0px;top:273.5px;width:54px;height:16px;line-height:16px;text-align:center;font-size:12.5px">OrigPri...</div>
<div class="t" style="left:350.0px;top:273.5px;width:54px;height:16px;line-height:16px;text-align:center;font-size:12.5px">IVChg</div>
<div class="t" style="left:404.0px;top:273.5px;width:54px;height:16px;line-height:16px;text-align:center;font-size:12.5px">Model</div>
<div class="t" style="left:458.0px;top:273.5px;width:61px;height:16px;line-height:16px;text-align:center;font-size:12.5px">Pos</div>
<div style="left:81px;top:293px;width:438px;height:19px;background:#c8e5ee"></div>
<div style="left:81px;top:311px;width:438px;height:1px;background:#d3d1dc"></div>
<div class="t" style="left:76.5px;top:294.5px;width:54px;height:16px;line-height:16px;text-align:right;font-size:12.5px;color:#ee1c24">1.49</div>
<div class="t" style="left:130.5px;top:294.5px;width:54px;height:16px;line-height:16px;text-align:right;font-size:12.5px;color:#111">22.43</div>
<div class="t" style="left:184.5px;top:294.5px;width:54px;height:16px;line-height:16px;text-align:right;font-size:12.5px;color:#111">-0.04</div>
<div class="t" style="left:238.5px;top:294.5px;width:54px;height:16px;line-height:16px;text-align:right;font-size:12.5px;color:#111">1.49</div>
<div class="t" style="left:400.5px;top:294.5px;width:54px;height:16px;line-height:16px;text-align:right;font-size:12.5px;color:#111">+1</div>
<div style="left:81px;top:312px;width:438px;height:19px;background:#fffbee"></div>
<div style="left:81px;top:330px;width:438px;height:1px;background:#d3d1dc"></div>
<div class="t" style="left:76.5px;top:313.5px;width:54px;height:16px;line-height:16px;text-align:right;font-size:12.5px;color:#2a8a2a">1.605</div>
<div class="t" style="left:130.5px;top:313.5px;width:54px;height:16px;line-height:16px;text-align:right;font-size:12.5px;color:#111">24.03</div>
<div class="t" style="left:184.5px;top:313.5px;width:54px;height:16px;line-height:16px;text-align:right;font-size:12.5px;color:#111">-0.04</div>
<div class="t" style="left:238.5px;top:313.5px;width:54px;height:16px;line-height:16px;text-align:right;font-size:12.5px;color:#111">1.61</div>
<div class="t" style="left:292.5px;top:313.5px;width:54px;height:16px;line-height:16px;text-align:right;font-size:12.5px;color:#111">0.70</div>
<div class="t" style="left:346.5px;top:313.5px;width:54px;height:16px;line-height:16px;text-align:right;font-size:12.5px;color:#111">7.23</div>
<div class="t" style="left:400.5px;top:313.5px;width:54px;height:16px;line-height:16px;text-align:right;font-size:12.5px;color:#111">-1</div>
<div class="t" style="left:454.5px;top:313.5px;width:61px;height:16px;line-height:16px;text-align:right;font-size:12.5px;color:#111">+1</div>
<div style="left:81px;top:331px;width:438px;height:19px;background:#a8c0df"></div>
<div style="left:81px;top:349px;width:438px;height:1px;background:#c8cfe0"></div>
<div class="t" style="left:76.5px;top:332.5px;width:54px;height:16px;line-height:16px;text-align:right;font-size:12.5px;color:#ee1c24">1.725</div>
<div class="t" style="left:130.5px;top:332.5px;width:54px;height:16px;line-height:16px;text-align:right;font-size:12.5px;color:#111">25.73</div>
<div class="t" style="left:184.5px;top:332.5px;width:54px;height:16px;line-height:16px;text-align:right;font-size:12.5px;color:#111">-0.04</div>
<div class="t" style="left:238.5px;top:332.5px;width:54px;height:16px;line-height:16px;text-align:right;font-size:12.5px;color:#111">1.73</div>
<div style="left:81px;top:350px;width:438px;height:19px;background:#a8c0df"></div>
<div style="left:81px;top:368px;width:438px;height:1px;background:#c8cfe0"></div>
<div class="t" style="left:76.5px;top:351.5px;width:54px;height:16px;line-height:16px;text-align:right;font-size:12.5px;color:#ee1c24">1.865</div>
<div class="t" style="left:130.5px;top:351.5px;width:54px;height:16px;line-height:16px;text-align:right;font-size:12.5px;color:#111">27.63</div>
<div class="t" style="left:184.5px;top:351.5px;width:54px;height:16px;line-height:16px;text-align:right;font-size:12.5px;color:#111">-0.04</div>
<div class="t" style="left:238.5px;top:351.5px;width:54px;height:16px;line-height:16px;text-align:right;font-size:12.5px;color:#111">1.87</div>
<div style="left:81px;top:369px;width:438px;height:19px;background:#a8c0df"></div>
<div style="left:81px;top:387px;width:438px;height:1px;background:#c8cfe0"></div>
<div class="t" style="left:76.5px;top:370.5px;width:54px;height:16px;line-height:16px;text-align:right;font-size:12.5px;color:#2a8a2a">2.025</div>
<div class="t" style="left:130.5px;top:370.5px;width:54px;height:16px;line-height:16px;text-align:right;font-size:12.5px;color:#111">29.72</div>
<div class="t" style="left:184.5px;top:370.5px;width:54px;height:16px;line-height:16px;text-align:right;font-size:12.5px;color:#111">-0.04</div>
<div class="t" style="left:238.5px;top:370.5px;width:54px;height:16px;line-height:16px;text-align:right;font-size:12.5px;color:#111">2.03</div>
<div style="left:81px;top:388px;width:438px;height:19px;background:#a8c0df"></div>
<div style="left:81px;top:406px;width:438px;height:1px;background:#c8cfe0"></div>
<div class="t" style="left:76.5px;top:389.5px;width:54px;height:16px;line-height:16px;text-align:right;font-size:12.5px;color:#2a8a2a">2.195</div>
<div class="t" style="left:130.5px;top:389.5px;width:54px;height:16px;line-height:16px;text-align:right;font-size:12.5px;color:#111">31.97</div>
<div class="t" style="left:184.5px;top:389.5px;width:54px;height:16px;line-height:16px;text-align:right;font-size:12.5px;color:#111">-0.05</div>
<div class="t" style="left:238.5px;top:389.5px;width:54px;height:16px;line-height:16px;text-align:right;font-size:12.5px;color:#111">2.20</div>
<div style="left:81px;top:407px;width:438px;height:19px;background:#a8c0df"></div>
<div style="left:81px;top:425px;width:438px;height:1px;background:#c8cfe0"></div>
<div class="t" style="left:76.5px;top:408.5px;width:54px;height:16px;line-height:16px;text-align:right;font-size:12.5px;color:#2a8a2a">2.395</div>
<div class="t" style="left:130.5px;top:408.5px;width:54px;height:16px;line-height:16px;text-align:right;font-size:12.5px;color:#111">34.46</div>
<div class="t" style="left:184.5px;top:408.5px;width:54px;height:16px;line-height:16px;text-align:right;font-size:12.5px;color:#111">-0.05</div>
<div class="t" style="left:238.5px;top:408.5px;width:54px;height:16px;line-height:16px;text-align:right;font-size:12.5px;color:#111">2.39</div>
<div style="left:81px;top:426px;width:438px;height:19px;background:#a8c0df"></div>
<div style="left:81px;top:444px;width:438px;height:1px;background:#c8cfe0"></div>
<div class="t" style="left:76.5px;top:427.5px;width:54px;height:16px;line-height:16px;text-align:right;font-size:12.5px;color:#ee1c24">2.61</div>
<div class="t" style="left:130.5px;top:427.5px;width:54px;height:16px;line-height:16px;text-align:right;font-size:12.5px;color:#111">37.11</div>
<div class="t" style="left:184.5px;top:427.5px;width:54px;height:16px;line-height:16px;text-align:right;font-size:12.5px;color:#111">-0.05</div>
<div class="t" style="left:238.5px;top:427.5px;width:54px;height:16px;line-height:16px;text-align:right;font-size:12.5px;color:#111">2.61</div>
<div class="t" style="left:400.5px;top:427.5px;width:54px;height:16px;line-height:16px;text-align:right;font-size:12.5px;color:#111">-1</div>
<div style="left:81px;top:445px;width:438px;height:19px;background:#a8c0df"></div>
<div style="left:81px;top:463px;width:438px;height:1px;background:#c8cfe0"></div>
<div class="t" style="left:76.5px;top:446.5px;width:54px;height:16px;line-height:16px;text-align:right;font-size:12.5px;color:#2a8a2a">2.855</div>
<div class="t" style="left:130.5px;top:446.5px;width:54px;height:16px;line-height:16px;text-align:right;font-size:12.5px;color:#111">39.99</div>
<div class="t" style="left:184.5px;top:446.5px;width:54px;height:16px;line-height:16px;text-align:right;font-size:12.5px;color:#111">-0.05</div>
<div class="t" style="left:238.5px;top:446.5px;width:54px;height:16px;line-height:16px;text-align:right;font-size:12.5px;color:#111">2.86</div>
<div class="t" style="left:292.5px;top:446.5px;width:54px;height:16px;line-height:16px;text-align:right;font-size:12.5px;color:#111">1.31</div>
<div class="t" style="left:346.5px;top:446.5px;width:54px;height:16px;line-height:16px;text-align:right;font-size:12.5px;color:#111">7.29</div>
<div class="t" style="left:400.5px;top:446.5px;width:54px;height:16px;line-height:16px;text-align:right;font-size:12.5px;color:#111">+1</div>
<div class="t" style="left:454.5px;top:446.5px;width:61px;height:16px;line-height:16px;text-align:right;font-size:12.5px;color:#111">-1</div>
<div style="left:81px;top:464px;width:438px;height:19px;background:#a8c0df"></div>
<div style="left:81px;top:482px;width:438px;height:1px;background:#c8cfe0"></div>
<div class="t" style="left:76.5px;top:465.5px;width:54px;height:16px;line-height:16px;text-align:right;font-size:12.5px;color:#ee1c24">3.125</div>
<div class="t" style="left:130.5px;top:465.5px;width:54px;height:16px;line-height:16px;text-align:right;font-size:12.5px;color:#111">43.05</div>
<div class="t" style="left:184.5px;top:465.5px;width:54px;height:16px;line-height:16px;text-align:right;font-size:12.5px;color:#111">-0.05</div>
<div class="t" style="left:238.5px;top:465.5px;width:54px;height:16px;line-height:16px;text-align:right;font-size:12.5px;color:#111">3.13</div>
<div style="left:81px;top:483px;width:438px;height:19px;background:#a8c0df"></div>
<div style="left:81px;top:501px;width:438px;height:1px;background:#c8cfe0"></div>
<div class="t" style="left:76.5px;top:484.5px;width:54px;height:16px;line-height:16px;text-align:right;font-size:12.5px;color:#ee1c24">3.425</div>
<div class="t" style="left:130.5px;top:484.5px;width:54px;height:16px;line-height:16px;text-align:right;font-size:12.5px;color:#111">46.38</div>
<div class="t" style="left:184.5px;top:484.5px;width:54px;height:16px;line-height:16px;text-align:right;font-size:12.5px;color:#111">-0.05</div>
<div class="t" style="left:238.5px;top:484.5px;width:54px;height:16px;line-height:16px;text-align:right;font-size:12.5px;color:#111">3.43</div>
<div style="left:81px;top:502px;width:438px;height:19px;background:#a8c0df"></div>
<div style="left:81px;top:520px;width:438px;height:1px;background:#c8cfe0"></div>
<div class="t" style="left:76.5px;top:503.5px;width:54px;height:16px;line-height:16px;text-align:right;font-size:12.5px;color:#2a8a2a">3.76</div>
<div class="t" style="left:130.5px;top:503.5px;width:54px;height:16px;line-height:16px;text-align:right;font-size:12.5px;color:#111">49.89</div>
<div class="t" style="left:184.5px;top:503.5px;width:54px;height:16px;line-height:16px;text-align:right;font-size:12.5px;color:#111">-0.05</div>
<div class="t" style="left:238.5px;top:503.5px;width:54px;height:16px;line-height:16px;text-align:right;font-size:12.5px;color:#111">3.76</div>
<div style="left:81px;top:521px;width:438px;height:19px;background:#a8c0df"></div>
<div style="left:81px;top:539px;width:438px;height:1px;background:#c8cfe0"></div>
<div class="t" style="left:76.5px;top:522.5px;width:54px;height:16px;line-height:16px;text-align:right;font-size:12.5px;color:#ee1c24">4.125</div>
<div class="t" style="left:130.5px;top:522.5px;width:54px;height:16px;line-height:16px;text-align:right;font-size:12.5px;color:#111">53.57</div>
<div class="t" style="left:184.5px;top:522.5px;width:54px;height:16px;line-height:16px;text-align:right;font-size:12.5px;color:#111">-0.05</div>
<div class="t" style="left:238.5px;top:522.5px;width:54px;height:16px;line-height:16px;text-align:right;font-size:12.5px;color:#111">4.13</div>
<div style="left:81px;top:540px;width:438px;height:19px;background:#a8c0df"></div>
<div style="left:81px;top:558px;width:438px;height:1px;background:#c8cfe0"></div>
<div class="t" style="left:76.5px;top:541.5px;width:54px;height:16px;line-height:16px;text-align:right;font-size:12.5px;color:#ee1c24">4.53</div>
<div class="t" style="left:130.5px;top:541.5px;width:54px;height:16px;line-height:16px;text-align:right;font-size:12.5px;color:#111">57.49</div>
<div class="t" style="left:184.5px;top:541.5px;width:54px;height:16px;line-height:16px;text-align:right;font-size:12.5px;color:#111">-0.04</div>
<div class="t" style="left:238.5px;top:541.5px;width:54px;height:16px;line-height:16px;text-align:right;font-size:12.5px;color:#111">3.75</div>
<div style="left:81px;top:559px;width:438px;height:19px;background:#a8c0df"></div>
<div style="left:81px;top:577px;width:438px;height:1px;background:#c8cfe0"></div>
<div class="t" style="left:76.5px;top:560.5px;width:54px;height:16px;line-height:16px;text-align:right;font-size:12.5px;color:#ee1c24">4.97</div>
<div class="t" style="left:130.5px;top:560.5px;width:54px;height:16px;line-height:16px;text-align:right;font-size:12.5px;color:#111">61.51</div>
<div class="t" style="left:184.5px;top:560.5px;width:54px;height:16px;line-height:16px;text-align:right;font-size:12.5px;color:#111">-0.04</div>
<div class="t" style="left:238.5px;top:560.5px;width:54px;height:16px;line-height:16px;text-align:right;font-size:12.5px;color:#111">3.20</div>
<div style="left:134px;top:272px;width:1px;height:306px;background:#cdd2dc;opacity:0.9"></div>
<div style="left:188px;top:272px;width:1px;height:306px;background:#cdd2dc;opacity:0.9"></div>
<div style="left:242px;top:272px;width:1px;height:306px;background:#cdd2dc;opacity:0.9"></div>
<div style="left:296px;top:272px;width:1px;height:306px;background:#cdd2dc;opacity:0.9"></div>
<div style="left:350px;top:272px;width:1px;height:306px;background:#cdd2dc;opacity:0.9"></div>
<div style="left:404px;top:272px;width:1px;height:306px;background:#cdd2dc;opacity:0.9"></div>
<div style="left:458px;top:272px;width:1px;height:306px;background:#cdd2dc;opacity:0.9"></div>
<div style="left:522px;top:249px;width:439px;height:330px;border:1px solid #a3adbf;background:#d6dce8"></div>
<div class="t" style="left:566.0px;top:252.0px;width:300px;height:16px;line-height:16px;text-align:center;font-size:13px;font-weight:bold;color:#111">may. 26 (78)&nbsp; LO.K26</div>
<div class="t" style="left:556px;top:252.0px;width:400px;height:16px;line-height:16px;text-align:right;font-size:13px;font-weight:bold;color:#111">40.79%</div>
<div style="left:523px;top:271px;width:437px;height:1px;background:#a3adbf"></div>
<div style="left:523px;top:272px;width:437px;height:20px;background:#f7f8fc"></div>
<div style="left:523px;top:292px;width:437px;height:1px;background:#cdd2dc"></div>
<div style="left:943px;top:272px;width:1px;height:20px;background:#cdd2dc"></div>
<div class="t" style="left:522.0px;top:273.5px;width:52px;height:16px;line-height:16px;text-align:center;font-size:12.5px">Mid</div>
<div class="t" style="left:574.0px;top:273.5px;width:52px;height:16px;line-height:16px;text-align:center;font-size:12.5px">Delta</div>
<div class="t" style="left:626.0px;top:273.5px;width:52px;height:16px;line-height:16px;text-align:center;font-size:12.5px">Theta</div>
<div class="t" style="left:678.0px;top:273.5px;width:52px;height:16px;line-height:16px;text-align:center;font-size:12.5px">Extrin...</div>
<div class="t" style="left:730.0px;top:273.5px;width:52px;height:16px;line-height:16px;text-align:center;font-size:12.5px">OrigPr...</div>
<div class="t" style="left:782.0px;top:273.5px;width:52px;height:16px;line-height:16px;text-align:center;font-size:12.5px">IVChg</div>
<div class="t" style="left:834.0px;top:273.5px;width:52px;height:16px;line-height:16px;text-align:center;font-size:12.5px">Model</div>
<div class="t" style="left:886.0px;top:273.5px;width:57px;height:16px;line-height:16px;text-align:center;font-size:12.5px">Pos</div>
<div style="left:523px;top:293px;width:420px;height:19px;background:#c8e5ee"></div>
<div style="left:523px;top:311px;width:420px;height:1px;background:#d3d1dc"></div>
<div class="t" style="left:518.5px;top:294.5px;width:52px;height:16px;line-height:16px;text-align:right;font-size:12.5px;color:#ee1c24">1.81</div>
<div class="t" style="left:570.5px;top:294.5px;width:52px;height:16px;line-height:16px;text-align:right;font-size:12.5px;color:#111">24.64</div>
<div class="t" style="left:622.5px;top:294.5px;width:52px;height:16px;line-height:16px;text-align:right;font-size:12.5px;color:#111">-0.03</div>
<div class="t" style="left:674.5px;top:294.5px;width:52px;height:16px;line-height:16px;text-align:right;font-size:12.5px;color:#111">1.81</div>
<div style="left:523px;top:312px;width:420px;height:19px;background:#fffbee"></div>
<div style="left:523px;top:330px;width:420px;height:1px;background:#d3d1dc"></div>
<div class="t" style="left:518.5px;top:313.5px;width:52px;height:16px;line-height:16px;text-align:right;font-size:12.5px;color:#ee1c24">1.94</div>
<div class="t" style="left:570.5px;top:313.5px;width:52px;height:16px;line-height:16px;text-align:right;font-size:12.5px;color:#111">26.24</div>
<div class="t" style="left:622.5px;top:313.5px;width:52px;height:16px;line-height:16px;text-align:right;font-size:12.5px;color:#111">-0.03</div>
<div class="t" style="left:674.5px;top:313.5px;width:52px;height:16px;line-height:16px;text-align:right;font-size:12.5px;color:#111">1.94</div>
<div style="left:523px;top:331px;width:420px;height:19px;background:#a8c0df"></div>
<div style="left:523px;top:349px;width:420px;height:1px;background:#c8cfe0"></div>
<div class="t" style="left:518.5px;top:332.5px;width:52px;height:16px;line-height:16px;text-align:right;font-size:12.5px;color:#ee1c24">2.085</div>
<div class="t" style="left:570.5px;top:332.5px;width:52px;height:16px;line-height:16px;text-align:right;font-size:12.5px;color:#111">27.97</div>
<div class="t" style="left:622.5px;top:332.5px;width:52px;height:16px;line-height:16px;text-align:right;font-size:12.5px;color:#111">-0.03</div>
<div class="t" style="left:674.5px;top:332.5px;width:52px;height:16px;line-height:16px;text-align:right;font-size:12.5px;color:#111">2.09</div>
<div style="left:523px;top:350px;width:420px;height:19px;background:#a8c0df"></div>
<div style="left:523px;top:368px;width:420px;height:1px;background:#c8cfe0"></div>
<div class="t" style="left:518.5px;top:351.5px;width:52px;height:16px;line-height:16px;text-align:right;font-size:12.5px;color:#ee1c24">2.25</div>
<div class="t" style="left:570.5px;top:351.5px;width:52px;height:16px;line-height:16px;text-align:right;font-size:12.5px;color:#111">29.87</div>
<div class="t" style="left:622.5px;top:351.5px;width:52px;height:16px;line-height:16px;text-align:right;font-size:12.5px;color:#111">-0.03</div>
<div class="t" style="left:674.5px;top:351.5px;width:52px;height:16px;line-height:16px;text-align:right;font-size:12.5px;color:#111">2.25</div>
<div style="left:523px;top:369px;width:420px;height:19px;background:#a8c0df"></div>
<div style="left:523px;top:387px;width:420px;height:1px;background:#c8cfe0"></div>
<div class="t" style="left:518.5px;top:370.5px;width:52px;height:16px;line-height:16px;text-align:right;font-size:12.5px;color:#ee1c24">2.43</div>
<div class="t" style="left:570.5px;top:370.5px;width:52px;height:16px;line-height:16px;text-align:right;font-size:12.5px;color:#111">31.90</div>
<div class="t" style="left:622.5px;top:370.5px;width:52px;height:16px;line-height:16px;text-align:right;font-size:12.5px;color:#111">-0.03</div>
<div class="t" style="left:674.5px;top:370.5px;width:52px;height:16px;line-height:16px;text-align:right;font-size:12.5px;color:#111">2.43</div>
<div style="left:523px;top:388px;width:420px;height:19px;background:#a8c0df"></div>
<div style="left:523px;top:406px;width:420px;height:1px;background:#c8cfe0"></div>
<div class="t" style="left:518.5px;top:389.5px;width:52px;height:16px;line-height:16px;text-align:right;font-size:12.5px;color:#2a8a2a">2.63</div>
<div class="t" style="left:570.5px;top:389.5px;width:52px;height:16px;line-height:16px;text-align:right;font-size:12.5px;color:#111">34.09</div>
<div class="t" style="left:622.5px;top:389.5px;width:52px;height:16px;line-height:16px;text-align:right;font-size:12.5px;color:#111">-0.03</div>
<div class="t" style="left:674.5px;top:389.5px;width:52px;height:16px;line-height:16px;text-align:right;font-size:12.5px;color:#111">2.63</div>
<div style="left:523px;top:407px;width:420px;height:19px;background:#a8c0df"></div>
<div style="left:523px;top:425px;width:420px;height:1px;background:#c8cfe0"></div>
<div class="t" style="left:518.5px;top:408.5px;width:52px;height:16px;line-height:16px;text-align:right;font-size:12.5px;color:#ee1c24">2.85</div>
<div class="t" style="left:570.5px;top:408.5px;width:52px;height:16px;line-height:16px;text-align:right;font-size:12.5px;color:#111">36.43</div>
<div class="t" style="left:622.5px;top:408.5px;width:52px;height:16px;line-height:16px;text-align:right;font-size:12.5px;color:#111">-0.03</div>
<div class="t" style="left:674.5px;top:408.5px;width:52px;height:16px;line-height:16px;text-align:right;font-size:12.5px;color:#111">2.85</div>
<div style="left:523px;top:426px;width:420px;height:19px;background:#a8c0df"></div>
<div style="left:523px;top:444px;width:420px;height:1px;background:#c8cfe0"></div>
<div class="t" style="left:518.5px;top:427.5px;width:52px;height:16px;line-height:16px;text-align:right;font-size:12.5px;color:#ee1c24">3.09</div>
<div class="t" style="left:570.5px;top:427.5px;width:52px;height:16px;line-height:16px;text-align:right;font-size:12.5px;color:#111">38.92</div>
<div class="t" style="left:622.5px;top:427.5px;width:52px;height:16px;line-height:16px;text-align:right;font-size:12.5px;color:#111">-0.03</div>
<div class="t" style="left:674.5px;top:427.5px;width:52px;height:16px;line-height:16px;text-align:right;font-size:12.5px;color:#111">3.09</div>
<div style="left:523px;top:445px;width:420px;height:19px;background:#a8c0df"></div>
<div style="left:523px;top:463px;width:420px;height:1px;background:#c8cfe0"></div>
<div class="t" style="left:518.5px;top:446.5px;width:52px;height:16px;line-height:16px;text-align:right;font-size:12.5px;color:#2a8a2a">3.355</div>
<div class="t" style="left:570.5px;top:446.5px;width:52px;height:16px;line-height:16px;text-align:right;font-size:12.5px;color:#111">41.56</div>
<div class="t" style="left:622.5px;top:446.5px;width:52px;height:16px;line-height:16px;text-align:right;font-size:12.5px;color:#111">-0.03</div>
<div class="t" style="left:674.5px;top:446.5px;width:52px;height:16px;line-height:16px;text-align:right;font-size:12.5px;color:#111">3.36</div>
<div style="left:523px;top:464px;width:420px;height:19px;background:#a8c0df"></div>
<div style="left:523px;top:482px;width:420px;height:1px;background:#c8cfe0"></div>
<div class="t" style="left:518.5px;top:465.5px;width:52px;height:16px;line-height:16px;text-align:right;font-size:12.5px;color:#ee1c24">3.65</div>
<div class="t" style="left:570.5px;top:465.5px;width:52px;height:16px;line-height:16px;text-align:right;font-size:12.5px;color:#111">44.37</div>
<div class="t" style="left:622.5px;top:465.5px;width:52px;height:16px;line-height:16px;text-align:right;font-size:12.5px;color:#111">-0.03</div>
<div class="t" style="left:674.5px;top:465.5px;width:52px;height:16px;line-height:16px;text-align:right;font-size:12.5px;color:#111">3.65</div>
<div style="left:523px;top:483px;width:420px;height:19px;background:#a8c0df"></div>
<div style="left:523px;top:501px;width:420px;height:1px;background:#c8cfe0"></div>
<div class="t" style="left:518.5px;top:484.5px;width:52px;height:16px;line-height:16px;text-align:right;font-size:12.5px;color:#ee1c24">3.965</div>
<div class="t" style="left:570.5px;top:484.5px;width:52px;height:16px;line-height:16px;text-align:right;font-size:12.5px;color:#111">47.31</div>
<div class="t" style="left:622.5px;top:484.5px;width:52px;height:16px;line-height:16px;text-align:right;font-size:12.5px;color:#111">-0.03</div>
<div class="t" style="left:674.5px;top:484.5px;width:52px;height:16px;line-height:16px;text-align:right;font-size:12.5px;color:#111">3.97</div>
<div style="left:523px;top:502px;width:420px;height:19px;background:#a8c0df"></div>
<div style="left:523px;top:520px;width:420px;height:1px;background:#c8cfe0"></div>
<div class="t" style="left:518.5px;top:503.5px;width:52px;height:16px;line-height:16px;text-align:right;font-size:12.5px;color:#2a8a2a">4.315</div>
<div class="t" style="left:570.5px;top:503.5px;width:52px;height:16px;line-height:16px;text-align:right;font-size:12.5px;color:#111">50.40</div>
<div class="t" style="left:622.5px;top:503.5px;width:52px;height:16px;line-height:16px;text-align:right;font-size:12.5px;color:#111">-0.03</div>
<div class="t" style="left:674.5px;top:503.5px;width:52px;height:16px;line-height:16px;text-align:right;font-size:12.5px;color:#111">4.32</div>
<div style="left:523px;top:521px;width:420px;height:19px;background:#a8c0df"></div>
<div style="left:523px;top:539px;width:420px;height:1px;background:#c8cfe0"></div>
<div class="t" style="left:518.5px;top:522.5px;width:52px;height:16px;line-height:16px;text-align:right;font-size:12.5px;color:#ee1c24">4.69</div>
<div class="t" style="left:570.5px;top:522.5px;width:52px;height:16px;line-height:16px;text-align:right;font-size:12.5px;color:#111">53.61</div>
<div class="t" style="left:622.5px;top:522.5px;width:52px;height:16px;line-height:16px;text-align:right;font-size:12.5px;color:#111">-0.03</div>
<div class="t" style="left:674.5px;top:522.5px;width:52px;height:16px;line-height:16px;text-align:right;font-size:12.5px;color:#111">4.69</div>
<div style="left:523px;top:540px;width:420px;height:19px;background:#a8c0df"></div>
<div style="left:523px;top:558px;width:420px;height:1px;background:#c8cfe0"></div>
<div class="t" style="left:518.5px;top:541.5px;width:52px;height:16px;line-height:16px;text-align:right;font-size:12.5px;color:#ee1c24">5.105</div>
<div class="t" style="left:570.5px;top:541.5px;width:52px;height:16px;line-height:16px;text-align:right;font-size:12.5px;color:#111">56.95</div>
<div class="t" style="left:622.5px;top:541.5px;width:52px;height:16px;line-height:16px;text-align:right;font-size:12.5px;color:#111">-0.03</div>
<div class="t" style="left:674.5px;top:541.5px;width:52px;height:16px;line-height:16px;text-align:right;font-size:12.5px;color:#111">4.65</div>
<div style="left:523px;top:559px;width:420px;height:19px;background:#a8c0df"></div>
<div style="left:523px;top:577px;width:420px;height:1px;background:#c8cfe0"></div>
<div class="t" style="left:518.5px;top:560.5px;width:52px;height:16px;line-height:16px;text-align:right;font-size:12.5px;color:#ee1c24">5.55</div>
<div class="t" style="left:570.5px;top:560.5px;width:52px;height:16px;line-height:16px;text-align:right;font-size:12.5px;color:#111">60.37</div>
<div class="t" style="left:622.5px;top:560.5px;width:52px;height:16px;line-height:16px;text-align:right;font-size:12.5px;color:#111">-0.03</div>
<div class="t" style="left:674.5px;top:560.5px;width:52px;height:16px;line-height:16px;text-align:right;font-size:12.5px;color:#111">4.10</div>
<div style="left:574px;top:272px;width:1px;height:306px;background:#cdd2dc;opacity:0.9"></div>
<div style="left:626px;top:272px;width:1px;height:306px;background:#cdd2dc;opacity:0.9"></div>
<div style="left:678px;top:272px;width:1px;height:306px;background:#cdd2dc;opacity:0.9"></div>
<div style="left:730px;top:272px;width:1px;height:306px;background:#cdd2dc;opacity:0.9"></div>
<div style="left:782px;top:272px;width:1px;height:306px;background:#cdd2dc;opacity:0.9"></div>
<div style="left:834px;top:272px;width:1px;height:306px;background:#cdd2dc;opacity:0.9"></div>
<div style="left:886px;top:272px;width:1px;height:306px;background:#cdd2dc;opacity:0.9"></div>
<div style="left:943px;top:293px;width:17px;height:285px;background:#d6dce8"></div>
<div style="left:947px;top:437px;width:9px;height:22px;background:#9aa4b6"></div>
<svg style="left:943px;top:293px" width="17" height="285"><path d="M4 12 L8.5 7.5 L13 12 Z" fill="#6a7590"/><path d="M4 273 L13 273 L8.5 277.5 Z" fill="#6a7590"/></svg>
<div style="left:17px;top:590px;width:60px;height:314px;border:1px solid #a3adbf;background:#fff"></div>
<div style="left:18px;top:591px;width:58px;height:20px;background:#f7f8fc"></div>
<div style="left:18px;top:611px;width:58px;height:1px;background:#cdd2dc"></div>
<div class="t" style="left:18.0px;top:592.5px;width:58px;height:16px;line-height:16px;text-align:center;font-size:11.5px">PUTS</div>
<div style="left:18px;top:612px;width:58px;height:19px;background:#ffffff"></div>
<div style="left:18px;top:630px;width:58px;height:1px;background:#d8dce4"></div>
<div class="t" style="left:18.0px;top:613.5px;width:58px;height:16px;line-height:16px;text-align:center;font-size:12.5px;color:#111">57</div>
<div style="left:18px;top:631px;width:58px;height:19px;background:#ffffff"></div>
<div style="left:18px;top:649px;width:58px;height:1px;background:#d8dce4"></div>
<div class="t" style="left:18.0px;top:632.5px;width:58px;height:16px;line-height:16px;text-align:center;font-size:12.5px;color:#111">56</div>
<div style="left:18px;top:650px;width:58px;height:19px;background:#ffffff"></div>
<div style="left:18px;top:668px;width:58px;height:1px;background:#d8dce4"></div>
<div class="t" style="left:18.0px;top:651.5px;width:58px;height:16px;line-height:16px;text-align:center;font-size:12.5px;color:#111">55</div>
<div style="left:18px;top:669px;width:58px;height:19px;background:#ffffff"></div>
<div style="left:18px;top:687px;width:58px;height:1px;background:#d8dce4"></div>
<div class="t" style="left:18.0px;top:670.5px;width:58px;height:16px;line-height:16px;text-align:center;font-size:12.5px;color:#111">54</div>
<div style="left:18px;top:688px;width:58px;height:19px;background:#ffffff"></div>
<div style="left:18px;top:706px;width:58px;height:1px;background:#d8dce4"></div>
<div class="t" style="left:18.0px;top:689.5px;width:58px;height:16px;line-height:16px;text-align:center;font-size:12.5px;color:#111">53</div>
<div style="left:18px;top:707px;width:58px;height:19px;background:#ffffff"></div>
<div style="left:18px;top:725px;width:58px;height:1px;background:#d8dce4"></div>
<div class="t" style="left:18.0px;top:708.5px;width:58px;height:16px;line-height:16px;text-align:center;font-size:12.5px;color:#111">52</div>
<div style="left:18px;top:726px;width:58px;height:19px;background:#ffffff"></div>
<div style="left:18px;top:744px;width:58px;height:1px;background:#d8dce4"></div>
<div class="t" style="left:18.0px;top:727.5px;width:58px;height:16px;line-height:16px;text-align:center;font-size:12.5px;color:#111">51</div>
<div style="left:18px;top:745px;width:58px;height:19px;background:#ffffff"></div>
<div style="left:18px;top:763px;width:58px;height:1px;background:#d8dce4"></div>
<div class="t" style="left:18.0px;top:746.5px;width:58px;height:16px;line-height:16px;text-align:center;font-size:12.5px;color:#111">50</div>
<div style="left:18px;top:764px;width:58px;height:19px;background:#ffffff"></div>
<div style="left:18px;top:782px;width:58px;height:1px;background:#d8dce4"></div>
<div class="t" style="left:18.0px;top:765.5px;width:58px;height:16px;line-height:16px;text-align:center;font-size:12.5px;color:#111">49</div>
<div style="left:18px;top:783px;width:58px;height:19px;background:#ffffff"></div>
<div style="left:18px;top:801px;width:58px;height:1px;background:#d8dce4"></div>
<div class="t" style="left:18.0px;top:784.5px;width:58px;height:16px;line-height:16px;text-align:center;font-size:12.5px;color:#111">48</div>
<div style="left:18px;top:802px;width:58px;height:19px;background:#ffffff"></div>
<div style="left:18px;top:820px;width:58px;height:1px;background:#d8dce4"></div>
<div class="t" style="left:18.0px;top:803.5px;width:58px;height:16px;line-height:16px;text-align:center;font-size:12.5px;color:#111">47</div>
<div style="left:18px;top:821px;width:58px;height:19px;background:#ffffff"></div>
<div style="left:18px;top:839px;width:58px;height:1px;background:#d8dce4"></div>
<div class="t" style="left:18.0px;top:822.5px;width:58px;height:16px;line-height:16px;text-align:center;font-size:12.5px;color:#111">46</div>
<div style="left:18px;top:840px;width:58px;height:19px;background:#fffbee"></div>
<div style="left:18px;top:858px;width:58px;height:1px;background:#d8dce4"></div>
<div class="t" style="left:18.0px;top:841.5px;width:58px;height:16px;line-height:16px;text-align:center;font-size:12.5px;color:#111">45</div>
<div style="left:18px;top:859px;width:58px;height:19px;background:#ffffff"></div>
<div style="left:18px;top:877px;width:58px;height:1px;background:#d8dce4"></div>
<div class="t" style="left:18.0px;top:860.5px;width:58px;height:16px;line-height:16px;text-align:center;font-size:12.5px;color:#111">44</div>
<div style="left:18px;top:878px;width:58px;height:19px;background:#ffffff"></div>
<div style="left:18px;top:896px;width:58px;height:1px;background:#d8dce4"></div>
<div class="t" style="left:18.0px;top:879.5px;width:58px;height:16px;line-height:16px;text-align:center;font-size:12.5px;color:#111">43</div>
<div style="left:18px;top:897px;width:58px;height:6px;background:#fff"></div>
<div style="left:80px;top:590px;width:440px;height:314px;border:1px solid #a3adbf;background:#d6dce8"></div>
<div style="left:81px;top:591px;width:438px;height:20px;background:#f7f8fc"></div>
<div style="left:81px;top:611px;width:438px;height:1px;background:#cdd2dc"></div>
<div class="t" style="left:80.0px;top:592.5px;width:54px;height:16px;line-height:16px;text-align:center;font-size:12.5px">Mid</div>
<div class="t" style="left:134.0px;top:592.5px;width:54px;height:16px;line-height:16px;text-align:center;font-size:12.5px">Delta</div>
<div class="t" style="left:188.0px;top:592.5px;width:54px;height:16px;line-height:16px;text-align:center;font-size:12.5px">Theta</div>
<div class="t" style="left:242.0px;top:592.5px;width:54px;height:16px;line-height:16px;text-align:center;font-size:12.5px">Extrins...</div>
<div class="t" style="left:296.0px;top:592.5px;width:54px;height:16px;line-height:16px;text-align:center;font-size:12.5px">OrigPri...</div>
<div class="t" style="left:350.0px;top:592.5px;width:54px;height:16px;line-height:16px;text-align:center;font-size:12.5px">IVChg</div>
<div class="t" style="left:404.0px;top:592.5px;width:54px;height:16px;line-height:16px;text-align:center;font-size:12.5px">Model</div>
<div class="t" style="left:458.0px;top:592.5px;width:61px;height:16px;line-height:16px;text-align:center;font-size:12.5px">Pos</div>
<div style="left:81px;top:612px;width:438px;height:19px;background:#a8c0df"></div>
<div style="left:81px;top:630px;width:438px;height:1px;background:#c8cfe0"></div>
<div class="t" style="left:76.5px;top:613.5px;width:54px;height:16px;line-height:16px;text-align:right;font-size:12.5px;color:#ee1c24">1.495</div>
<div class="t" style="left:130.5px;top:613.5px;width:54px;height:16px;line-height:16px;text-align:right;font-size:12.5px;color:#111">-23.65</div>
<div class="t" style="left:184.5px;top:613.5px;width:54px;height:16px;line-height:16px;text-align:right;font-size:12.5px;color:#111">-0.03</div>
<div class="t" style="left:238.5px;top:613.5px;width:54px;height:16px;line-height:16px;text-align:right;font-size:12.5px;color:#111">1.50</div>
<div style="left:81px;top:631px;width:438px;height:19px;background:#a8c0df"></div>
<div style="left:81px;top:649px;width:438px;height:1px;background:#c8cfe0"></div>
<div class="t" style="left:76.5px;top:632.5px;width:54px;height:16px;line-height:16px;text-align:right;font-size:12.5px;color:#ee1c24">1.20</div>
<div class="t" style="left:130.5px;top:632.5px;width:54px;height:16px;line-height:16px;text-align:right;font-size:12.5px;color:#111">-20.13</div>
<div class="t" style="left:184.5px;top:632.5px;width:54px;height:16px;line-height:16px;text-align:right;font-size:12.5px;color:#111">-0.03</div>
<div class="t" style="left:238.5px;top:632.5px;width:54px;height:16px;line-height:16px;text-align:right;font-size:12.5px;color:#111">1.20</div>
<div style="left:81px;top:650px;width:438px;height:19px;background:#a8c0df"></div>
<div style="left:81px;top:668px;width:438px;height:1px;background:#c8cfe0"></div>
<div class="t" style="left:76.5px;top:651.5px;width:54px;height:16px;line-height:16px;text-align:right;font-size:12.5px;color:#ee1c24">0.96</div>
<div class="t" style="left:130.5px;top:651.5px;width:54px;height:16px;line-height:16px;text-align:right;font-size:12.5px;color:#111">-17.01</div>
<div class="t" style="left:184.5px;top:651.5px;width:54px;height:16px;line-height:16px;text-align:right;font-size:12.5px;color:#111">-0.02</div>
<div class="t" style="left:238.5px;top:651.5px;width:54px;height:16px;line-height:16px;text-align:right;font-size:12.5px;color:#111">0.96</div>
<div style="left:81px;top:669px;width:438px;height:19px;background:#a8c0df"></div>
<div style="left:81px;top:687px;width:438px;height:1px;background:#c8cfe0"></div>
<div class="t" style="left:76.5px;top:670.5px;width:54px;height:16px;line-height:16px;text-align:right;font-size:12.5px;color:#ee1c24">0.77</div>
<div class="t" style="left:130.5px;top:670.5px;width:54px;height:16px;line-height:16px;text-align:right;font-size:12.5px;color:#111">-14.27</div>
<div class="t" style="left:184.5px;top:670.5px;width:54px;height:16px;line-height:16px;text-align:right;font-size:12.5px;color:#111">-0.02</div>
<div class="t" style="left:238.5px;top:670.5px;width:54px;height:16px;line-height:16px;text-align:right;font-size:12.5px;color:#111">0.77</div>
<div style="left:81px;top:688px;width:438px;height:19px;background:#a8c0df"></div>
<div style="left:81px;top:706px;width:438px;height:1px;background:#c8cfe0"></div>
<div class="t" style="left:76.5px;top:689.5px;width:54px;height:16px;line-height:16px;text-align:right;font-size:12.5px;color:#ee1c24">0.62</div>
<div class="t" style="left:130.5px;top:689.5px;width:54px;height:16px;line-height:16px;text-align:right;font-size:12.5px;color:#111">-11.90</div>
<div class="t" style="left:184.5px;top:689.5px;width:54px;height:16px;line-height:16px;text-align:right;font-size:12.5px;color:#111">-0.02</div>
<div class="t" style="left:238.5px;top:689.5px;width:54px;height:16px;line-height:16px;text-align:right;font-size:12.5px;color:#111">0.62</div>
<div class="t" style="left:400.5px;top:689.5px;width:54px;height:16px;line-height:16px;text-align:right;font-size:12.5px;color:#111">-1</div>
<div style="left:81px;top:707px;width:438px;height:19px;background:#c8e5ee"></div>
<div style="left:81px;top:725px;width:438px;height:1px;background:#d3d1dc"></div>
<div class="t" style="left:76.5px;top:708.5px;width:54px;height:16px;line-height:16px;text-align:right;font-size:12.5px;color:#ee1c24">0.50</div>
<div class="t" style="left:130.5px;top:708.5px;width:54px;height:16px;line-height:16px;text-align:right;font-size:12.5px;color:#111">-9.88</div>
<div class="t" style="left:184.5px;top:708.5px;width:54px;height:16px;line-height:16px;text-align:right;font-size:12.5px;color:#111">-0.02</div>
<div class="t" style="left:238.5px;top:708.5px;width:54px;height:16px;line-height:16px;text-align:right;font-size:12.5px;color:#111">0.50</div>
<div style="left:81px;top:726px;width:438px;height:19px;background:#c8e5ee"></div>
<div style="left:81px;top:744px;width:438px;height:1px;background:#d3d1dc"></div>
<div class="t" style="left:76.5px;top:727.5px;width:54px;height:16px;line-height:16px;text-align:right;font-size:12.5px;color:#2a8a2a">0.41</div>
<div class="t" style="left:130.5px;top:727.5px;width:54px;height:16px;line-height:16px;text-align:right;font-size:12.5px;color:#111">-8.24</div>
<div class="t" style="left:184.5px;top:727.5px;width:54px;height:16px;line-height:16px;text-align:right;font-size:12.5px;color:#111">-0.02</div>
<div class="t" style="left:238.5px;top:727.5px;width:54px;height:16px;line-height:16px;text-align:right;font-size:12.5px;color:#111">0.41</div>
<div class="t" style="left:292.5px;top:727.5px;width:54px;height:16px;line-height:16px;text-align:right;font-size:12.5px;color:#111">0.59</div>
<div class="t" style="left:346.5px;top:727.5px;width:54px;height:16px;line-height:16px;text-align:right;font-size:12.5px;color:#111">8.36</div>
<div class="t" style="left:400.5px;top:727.5px;width:54px;height:16px;line-height:16px;text-align:right;font-size:12.5px;color:#111">+1</div>
<div class="t" style="left:454.5px;top:727.5px;width:61px;height:16px;line-height:16px;text-align:right;font-size:12.5px;color:#111">-1</div>
<div style="left:81px;top:745px;width:438px;height:19px;background:#c8e5ee"></div>
<div style="left:81px;top:763px;width:438px;height:1px;background:#d3d1dc"></div>
<div class="t" style="left:76.5px;top:746.5px;width:54px;height:16px;line-height:16px;text-align:right;font-size:12.5px;color:#ee1c24">0.345</div>
<div class="t" style="left:130.5px;top:746.5px;width:54px;height:16px;line-height:16px;text-align:right;font-size:12.5px;color:#111">-6.98</div>
<div class="t" style="left:184.5px;top:746.5px;width:54px;height:16px;line-height:16px;text-align:right;font-size:12.5px;color:#111">-0.01</div>
<div class="t" style="left:238.5px;top:746.5px;width:54px;height:16px;line-height:16px;text-align:right;font-size:12.5px;color:#111">0.34</div>
<div style="left:81px;top:764px;width:438px;height:19px;background:#c8e5ee"></div>
<div style="left:81px;top:782px;width:438px;height:1px;background:#d3d1dc"></div>
<div class="t" style="left:76.5px;top:765.5px;width:54px;height:16px;line-height:16px;text-align:right;font-size:12.5px;color:#ee1c24">0.29</div>
<div class="t" style="left:130.5px;top:765.5px;width:54px;height:16px;line-height:16px;text-align:right;font-size:12.5px;color:#111">-5.89</div>
<div class="t" style="left:184.5px;top:765.5px;width:54px;height:16px;line-height:16px;text-align:right;font-size:12.5px;color:#111">-0.01</div>
<div class="t" style="left:238.5px;top:765.5px;width:54px;height:16px;line-height:16px;text-align:right;font-size:12.5px;color:#111">0.29</div>
<div style="left:81px;top:783px;width:438px;height:19px;background:#c8e5ee"></div>
<div style="left:81px;top:801px;width:438px;height:1px;background:#d3d1dc"></div>
<div class="t" style="left:76.5px;top:784.5px;width:54px;height:16px;line-height:16px;text-align:right;font-size:12.5px;color:#ee1c24">0.25</div>
<div class="t" style="left:130.5px;top:784.5px;width:54px;height:16px;line-height:16px;text-align:right;font-size:12.5px;color:#111">-5.06</div>
<div class="t" style="left:184.5px;top:784.5px;width:54px;height:16px;line-height:16px;text-align:right;font-size:12.5px;color:#111">-0.01</div>
<div class="t" style="left:238.5px;top:784.5px;width:54px;height:16px;line-height:16px;text-align:right;font-size:12.5px;color:#111">0.25</div>
<div style="left:81px;top:802px;width:438px;height:19px;background:#c8e5ee"></div>
<div style="left:81px;top:820px;width:438px;height:1px;background:#d3d1dc"></div>
<div class="t" style="left:76.5px;top:803.5px;width:54px;height:16px;line-height:16px;text-align:right;font-size:12.5px;color:#ee1c24">0.215</div>
<div class="t" style="left:130.5px;top:803.5px;width:54px;height:16px;line-height:16px;text-align:right;font-size:12.5px;color:#111">-4.32</div>
<div class="t" style="left:184.5px;top:803.5px;width:54px;height:16px;line-height:16px;text-align:right;font-size:12.5px;color:#111">-0.01</div>
<div class="t" style="left:238.5px;top:803.5px;width:54px;height:16px;line-height:16px;text-align:right;font-size:12.5px;color:#111">0.22</div>
<div style="left:81px;top:821px;width:438px;height:19px;background:#c8e5ee"></div>
<div style="left:81px;top:839px;width:438px;height:1px;background:#d3d1dc"></div>
<div class="t" style="left:76.5px;top:822.5px;width:54px;height:16px;line-height:16px;text-align:right;font-size:12.5px;color:#ee1c24">0.19</div>
<div class="t" style="left:130.5px;top:822.5px;width:54px;height:16px;line-height:16px;text-align:right;font-size:12.5px;color:#111">-3.77</div>
<div class="t" style="left:184.5px;top:822.5px;width:54px;height:16px;line-height:16px;text-align:right;font-size:12.5px;color:#111">-0.01</div>
<div class="t" style="left:238.5px;top:822.5px;width:54px;height:16px;line-height:16px;text-align:right;font-size:12.5px;color:#111">0.19</div>
<div class="t" style="left:400.5px;top:822.5px;width:54px;height:16px;line-height:16px;text-align:right;font-size:12.5px;color:#111">+1</div>
<div style="left:81px;top:840px;width:438px;height:19px;background:#fffbee"></div>
<div style="left:81px;top:858px;width:438px;height:1px;background:#d3d1dc"></div>
<div class="t" style="left:76.5px;top:841.5px;width:54px;height:16px;line-height:16px;text-align:right;font-size:12.5px;color:#ee1c24">0.17</div>
<div class="t" style="left:130.5px;top:841.5px;width:54px;height:16px;line-height:16px;text-align:right;font-size:12.5px;color:#111">-3.31</div>
<div class="t" style="left:184.5px;top:841.5px;width:54px;height:16px;line-height:16px;text-align:right;font-size:12.5px;color:#111">-0.01</div>
<div class="t" style="left:238.5px;top:841.5px;width:54px;height:16px;line-height:16px;text-align:right;font-size:12.5px;color:#111">0.17</div>
<div style="left:81px;top:859px;width:438px;height:19px;background:#c8e5ee"></div>
<div style="left:81px;top:877px;width:438px;height:1px;background:#d3d1dc"></div>
<div class="t" style="left:76.5px;top:860.5px;width:54px;height:16px;line-height:16px;text-align:right;font-size:12.5px;color:#2a8a2a">0.155</div>
<div class="t" style="left:130.5px;top:860.5px;width:54px;height:16px;line-height:16px;text-align:right;font-size:12.5px;color:#111">-2.95</div>
<div class="t" style="left:184.5px;top:860.5px;width:54px;height:16px;line-height:16px;text-align:right;font-size:12.5px;color:#111">-0.01</div>
<div class="t" style="left:238.5px;top:860.5px;width:54px;height:16px;line-height:16px;text-align:right;font-size:12.5px;color:#111">0.16</div>
<div class="t" style="left:292.5px;top:860.5px;width:54px;height:16px;line-height:16px;text-align:right;font-size:12.5px;color:#111">0.17</div>
<div class="t" style="left:346.5px;top:860.5px;width:54px;height:16px;line-height:16px;text-align:right;font-size:12.5px;color:#111">10.65</div>
<div class="t" style="left:400.5px;top:860.5px;width:54px;height:16px;line-height:16px;text-align:right;font-size:12.5px;color:#111">-1</div>
<div class="t" style="left:454.5px;top:860.5px;width:61px;height:16px;line-height:16px;text-align:right;font-size:12.5px;color:#111">+1</div>
<div style="left:81px;top:878px;width:438px;height:19px;background:#c8e5ee"></div>
<div style="left:81px;top:896px;width:438px;height:1px;background:#d3d1dc"></div>
<div class="t" style="left:76.5px;top:879.5px;width:54px;height:16px;line-height:16px;text-align:right;font-size:12.5px;color:#ee1c24">0.135</div>
<div class="t" style="left:130.5px;top:879.5px;width:54px;height:16px;line-height:16px;text-align:right;font-size:12.5px;color:#111">-2.55</div>
<div class="t" style="left:184.5px;top:879.5px;width:54px;height:16px;line-height:16px;text-align:right;font-size:12.5px;color:#111">-0.01</div>
<div class="t" style="left:238.5px;top:879.5px;width:54px;height:16px;line-height:16px;text-align:right;font-size:12.5px;color:#111">0.13</div>
<div style="left:81px;top:897px;width:438px;height:6px;background:#fff;overflow:hidden"></div>
<div style="left:80px;top:897px;width:54px;height:6px;overflow:hidden"><div class="t" style="right:5px;top:-1px;line-height:19px;font-size:12.5px;color:#2a8a2a">0.125</div></div>
<div style="left:134px;top:897px;width:54px;height:6px;overflow:hidden"><div class="t" style="right:5px;top:-1px;line-height:19px;font-size:12.5px;color:#111">-2.28</div></div>
<div style="left:188px;top:897px;width:54px;height:6px;overflow:hidden"><div class="t" style="right:5px;top:-1px;line-height:19px;font-size:12.5px;color:#111">-0.01</div></div>
<div style="left:242px;top:897px;width:54px;height:6px;overflow:hidden"><div class="t" style="right:5px;top:-1px;line-height:19px;font-size:12.5px;color:#111">0.12</div></div>
<div style="left:134px;top:591px;width:1px;height:312px;background:#cdd2dc;opacity:0.9"></div>
<div style="left:188px;top:591px;width:1px;height:312px;background:#cdd2dc;opacity:0.9"></div>
<div style="left:242px;top:591px;width:1px;height:312px;background:#cdd2dc;opacity:0.9"></div>
<div style="left:296px;top:591px;width:1px;height:312px;background:#cdd2dc;opacity:0.9"></div>
<div style="left:350px;top:591px;width:1px;height:312px;background:#cdd2dc;opacity:0.9"></div>
<div style="left:404px;top:591px;width:1px;height:312px;background:#cdd2dc;opacity:0.9"></div>
<div style="left:458px;top:591px;width:1px;height:312px;background:#cdd2dc;opacity:0.9"></div>
<div style="left:522px;top:590px;width:439px;height:314px;border:1px solid #a3adbf;background:#d6dce8"></div>
<div style="left:523px;top:591px;width:437px;height:20px;background:#f7f8fc"></div>
<div style="left:523px;top:611px;width:437px;height:1px;background:#cdd2dc"></div>
<div style="left:943px;top:591px;width:1px;height:20px;background:#cdd2dc"></div>
<div class="t" style="left:522.0px;top:592.5px;width:52px;height:16px;line-height:16px;text-align:center;font-size:12.5px">Mid</div>
<div class="t" style="left:574.0px;top:592.5px;width:52px;height:16px;line-height:16px;text-align:center;font-size:12.5px">Delta</div>
<div class="t" style="left:626.0px;top:592.5px;width:52px;height:16px;line-height:16px;text-align:center;font-size:12.5px">Theta</div>
<div class="t" style="left:678.0px;top:592.5px;width:52px;height:16px;line-height:16px;text-align:center;font-size:12.5px">Extrin...</div>
<div class="t" style="left:730.0px;top:592.5px;width:52px;height:16px;line-height:16px;text-align:center;font-size:12.5px">OrigPr...</div>
<div class="t" style="left:782.0px;top:592.5px;width:52px;height:16px;line-height:16px;text-align:center;font-size:12.5px">IVChg</div>
<div class="t" style="left:834.0px;top:592.5px;width:52px;height:16px;line-height:16px;text-align:center;font-size:12.5px">Model</div>
<div class="t" style="left:886.0px;top:592.5px;width:57px;height:16px;line-height:16px;text-align:center;font-size:12.5px">Pos</div>
<div style="left:523px;top:612px;width:420px;height:19px;background:#a8c0df"></div>
<div style="left:523px;top:630px;width:420px;height:1px;background:#c8cfe0"></div>
<div class="t" style="left:518.5px;top:613.5px;width:52px;height:16px;line-height:16px;text-align:right;font-size:12.5px;color:#2a8a2a">2.30</div>
<div class="t" style="left:570.5px;top:613.5px;width:52px;height:16px;line-height:16px;text-align:right;font-size:12.5px;color:#111">-27.35</div>
<div class="t" style="left:622.5px;top:613.5px;width:52px;height:16px;line-height:16px;text-align:right;font-size:12.5px;color:#111">-0.02</div>
<div class="t" style="left:674.5px;top:613.5px;width:52px;height:16px;line-height:16px;text-align:right;font-size:12.5px;color:#111">2.30</div>
<div style="left:523px;top:631px;width:420px;height:19px;background:#a8c0df"></div>
<div style="left:523px;top:649px;width:420px;height:1px;background:#c8cfe0"></div>
<div class="t" style="left:518.5px;top:632.5px;width:52px;height:16px;line-height:16px;text-align:right;font-size:12.5px;color:#2a8a2a">1.95</div>
<div class="t" style="left:570.5px;top:632.5px;width:52px;height:16px;line-height:16px;text-align:right;font-size:12.5px;color:#111">-24.34</div>
<div class="t" style="left:622.5px;top:632.5px;width:52px;height:16px;line-height:16px;text-align:right;font-size:12.5px;color:#111">-0.02</div>
<div class="t" style="left:674.5px;top:632.5px;width:52px;height:16px;line-height:16px;text-align:right;font-size:12.5px;color:#111">1.95</div>
<div style="left:523px;top:650px;width:420px;height:19px;background:#a8c0df"></div>
<div style="left:523px;top:668px;width:420px;height:1px;background:#c8cfe0"></div>
<div class="t" style="left:518.5px;top:651.5px;width:52px;height:16px;line-height:16px;text-align:right;font-size:12.5px;color:#2a8a2a">1.645</div>
<div class="t" style="left:570.5px;top:651.5px;width:52px;height:16px;line-height:16px;text-align:right;font-size:12.5px;color:#111">-21.49</div>
<div class="t" style="left:622.5px;top:651.5px;width:52px;height:16px;line-height:16px;text-align:right;font-size:12.5px;color:#111">-0.02</div>
<div class="t" style="left:674.5px;top:651.5px;width:52px;height:16px;line-height:16px;text-align:right;font-size:12.5px;color:#111">1.64</div>
<div style="left:523px;top:669px;width:420px;height:19px;background:#a8c0df"></div>
<div style="left:523px;top:687px;width:420px;height:1px;background:#c8cfe0"></div>
<div class="t" style="left:518.5px;top:670.5px;width:52px;height:16px;line-height:16px;text-align:right;font-size:12.5px;color:#ee1c24">1.38</div>
<div class="t" style="left:570.5px;top:670.5px;width:52px;height:16px;line-height:16px;text-align:right;font-size:12.5px;color:#111">-18.83</div>
<div class="t" style="left:622.5px;top:670.5px;width:52px;height:16px;line-height:16px;text-align:right;font-size:12.5px;color:#111">-0.02</div>
<div class="t" style="left:674.5px;top:670.5px;width:52px;height:16px;line-height:16px;text-align:right;font-size:12.5px;color:#111">1.38</div>
<div style="left:523px;top:688px;width:420px;height:19px;background:#a8c0df"></div>
<div style="left:523px;top:706px;width:420px;height:1px;background:#c8cfe0"></div>
<div class="t" style="left:518.5px;top:689.5px;width:52px;height:16px;line-height:16px;text-align:right;font-size:12.5px;color:#ee1c24">1.155</div>
<div class="t" style="left:570.5px;top:689.5px;width:52px;height:16px;line-height:16px;text-align:right;font-size:12.5px;color:#111">-16.35</div>
<div class="t" style="left:622.5px;top:689.5px;width:52px;height:16px;line-height:16px;text-align:right;font-size:12.5px;color:#111">-0.02</div>
<div class="t" style="left:674.5px;top:689.5px;width:52px;height:16px;line-height:16px;text-align:right;font-size:12.5px;color:#111">1.15</div>
<div style="left:523px;top:707px;width:420px;height:19px;background:#a8c0df"></div>
<div style="left:523px;top:725px;width:420px;height:1px;background:#c8cfe0"></div>
<div class="t" style="left:518.5px;top:708.5px;width:52px;height:16px;line-height:16px;text-align:right;font-size:12.5px;color:#ee1c24">0.97</div>
<div class="t" style="left:570.5px;top:708.5px;width:52px;height:16px;line-height:16px;text-align:right;font-size:12.5px;color:#111">-14.19</div>
<div class="t" style="left:622.5px;top:708.5px;width:52px;height:16px;line-height:16px;text-align:right;font-size:12.5px;color:#111">-0.02</div>
<div class="t" style="left:674.5px;top:708.5px;width:52px;height:16px;line-height:16px;text-align:right;font-size:12.5px;color:#111">0.97</div>
<div style="left:523px;top:726px;width:420px;height:19px;background:#a8c0df"></div>
<div style="left:523px;top:744px;width:420px;height:1px;background:#c8cfe0"></div>
<div class="t" style="left:518.5px;top:727.5px;width:52px;height:16px;line-height:16px;text-align:right;font-size:12.5px;color:#ee1c24">0.81</div>
<div class="t" style="left:570.5px;top:727.5px;width:52px;height:16px;line-height:16px;text-align:right;font-size:12.5px;color:#111">-12.20</div>
<div class="t" style="left:622.5px;top:727.5px;width:52px;height:16px;line-height:16px;text-align:right;font-size:12.5px;color:#111">-0.02</div>
<div class="t" style="left:674.5px;top:727.5px;width:52px;height:16px;line-height:16px;text-align:right;font-size:12.5px;color:#111">0.81</div>
<div style="left:523px;top:745px;width:420px;height:19px;background:#c8e5ee"></div>
<div style="left:523px;top:763px;width:420px;height:1px;background:#d3d1dc"></div>
<div class="t" style="left:518.5px;top:746.5px;width:52px;height:16px;line-height:16px;text-align:right;font-size:12.5px;color:#ee1c24">0.69</div>
<div class="t" style="left:570.5px;top:746.5px;width:52px;height:16px;line-height:16px;text-align:right;font-size:12.5px;color:#111">-10.57</div>
<div class="t" style="left:622.5px;top:746.5px;width:52px;height:16px;line-height:16px;text-align:right;font-size:12.5px;color:#111">-0.01</div>
<div class="t" style="left:674.5px;top:746.5px;width:52px;height:16px;line-height:16px;text-align:right;font-size:12.5px;color:#111">0.69</div>
<div style="left:523px;top:764px;width:420px;height:19px;background:#c8e5ee"></div>
<div style="left:523px;top:782px;width:420px;height:1px;background:#d3d1dc"></div>
<div class="t" style="left:518.5px;top:765.5px;width:52px;height:16px;line-height:16px;text-align:right;font-size:12.5px;color:#ee1c24">0.58</div>
<div class="t" style="left:570.5px;top:765.5px;width:52px;height:16px;line-height:16px;text-align:right;font-size:12.5px;color:#111">-9.06</div>
<div class="t" style="left:622.5px;top:765.5px;width:52px;height:16px;line-height:16px;text-align:right;font-size:12.5px;color:#111">-0.01</div>
<div class="t" style="left:674.5px;top:765.5px;width:52px;height:16px;line-height:16px;text-align:right;font-size:12.5px;color:#111">0.58</div>
<div style="left:523px;top:783px;width:420px;height:19px;background:#c8e5ee"></div>
<div style="left:523px;top:801px;width:420px;height:1px;background:#d3d1dc"></div>
<div class="t" style="left:518.5px;top:784.5px;width:52px;height:16px;line-height:16px;text-align:right;font-size:12.5px;color:#ee1c24">0.50</div>
<div class="t" style="left:570.5px;top:784.5px;width:52px;height:16px;line-height:16px;text-align:right;font-size:12.5px;color:#111">-7.86</div>
<div class="t" style="left:622.5px;top:784.5px;width:52px;height:16px;line-height:16px;text-align:right;font-size:12.5px;color:#111">-0.01</div>
<div class="t" style="left:674.5px;top:784.5px;width:52px;height:16px;line-height:16px;text-align:right;font-size:12.5px;color:#111">0.50</div>
<div style="left:523px;top:802px;width:420px;height:19px;background:#c8e5ee"></div>
<div style="left:523px;top:820px;width:420px;height:1px;background:#d3d1dc"></div>
<div class="t" style="left:518.5px;top:803.5px;width:52px;height:16px;line-height:16px;text-align:right;font-size:12.5px;color:#ee1c24">0.43</div>
<div class="t" style="left:570.5px;top:803.5px;width:52px;height:16px;line-height:16px;text-align:right;font-size:12.5px;color:#111">-6.81</div>
<div class="t" style="left:622.5px;top:803.5px;width:52px;height:16px;line-height:16px;text-align:right;font-size:12.5px;color:#111">-0.01</div>
<div class="t" style="left:674.5px;top:803.5px;width:52px;height:16px;line-height:16px;text-align:right;font-size:12.5px;color:#111">0.43</div>
<div style="left:523px;top:821px;width:420px;height:19px;background:#c8e5ee"></div>
<div style="left:523px;top:839px;width:420px;height:1px;background:#d3d1dc"></div>
<div class="t" style="left:518.5px;top:822.5px;width:52px;height:16px;line-height:16px;text-align:right;font-size:12.5px;color:#ee1c24">0.37</div>
<div class="t" style="left:570.5px;top:822.5px;width:52px;height:16px;line-height:16px;text-align:right;font-size:12.5px;color:#111">-5.89</div>
<div class="t" style="left:622.5px;top:822.5px;width:52px;height:16px;line-height:16px;text-align:right;font-size:12.5px;color:#111">-0.01</div>
<div class="t" style="left:674.5px;top:822.5px;width:52px;height:16px;line-height:16px;text-align:right;font-size:12.5px;color:#111">0.37</div>
<div style="left:523px;top:840px;width:420px;height:19px;background:#fffbee"></div>
<div style="left:523px;top:858px;width:420px;height:1px;background:#d3d1dc"></div>
<div class="t" style="left:518.5px;top:841.5px;width:52px;height:16px;line-height:16px;text-align:right;font-size:12.5px;color:#ee1c24">0.325</div>
<div class="t" style="left:570.5px;top:841.5px;width:52px;height:16px;line-height:16px;text-align:right;font-size:12.5px;color:#111">-5.15</div>
<div class="t" style="left:622.5px;top:841.5px;width:52px;height:16px;line-height:16px;text-align:right;font-size:12.5px;color:#111">-0.01</div>
<div class="t" style="left:674.5px;top:841.5px;width:52px;height:16px;line-height:16px;text-align:right;font-size:12.5px;color:#111">0.32</div>
<div style="left:523px;top:859px;width:420px;height:19px;background:#c8e5ee"></div>
<div style="left:523px;top:877px;width:420px;height:1px;background:#d3d1dc"></div>
<div class="t" style="left:518.5px;top:860.5px;width:52px;height:16px;line-height:16px;text-align:right;font-size:12.5px;color:#2a8a2a">0.29</div>
<div class="t" style="left:570.5px;top:860.5px;width:52px;height:16px;line-height:16px;text-align:right;font-size:12.5px;color:#111">-4.55</div>
<div class="t" style="left:622.5px;top:860.5px;width:52px;height:16px;line-height:16px;text-align:right;font-size:12.5px;color:#111">-0.01</div>
<div class="t" style="left:674.5px;top:860.5px;width:52px;height:16px;line-height:16px;text-align:right;font-size:12.5px;color:#111">0.29</div>
<div style="left:523px;top:878px;width:420px;height:19px;background:#c8e5ee"></div>
<div style="left:523px;top:896px;width:420px;height:1px;background:#d3d1dc"></div>
<div class="t" style="left:518.5px;top:879.5px;width:52px;height:16px;line-height:16px;text-align:right;font-size:12.5px;color:#2a8a2a">0.26</div>
<div class="t" style="left:570.5px;top:879.5px;width:52px;height:16px;line-height:16px;text-align:right;font-size:12.5px;color:#111">-4.03</div>
<div class="t" style="left:622.5px;top:879.5px;width:52px;height:16px;line-height:16px;text-align:right;font-size:12.5px;color:#111">-0.01</div>
<div class="t" style="left:674.5px;top:879.5px;width:52px;height:16px;line-height:16px;text-align:right;font-size:12.5px;color:#111">0.26</div>
<div style="left:523px;top:897px;width:420px;height:6px;background:#fff;overflow:hidden"></div>
<div style="left:522px;top:897px;width:52px;height:6px;overflow:hidden"><div class="t" style="right:5px;top:-1px;line-height:19px;font-size:12.5px;color:#ee1c24">0.22</div></div>
<div style="left:574px;top:897px;width:52px;height:6px;overflow:hidden"><div class="t" style="right:5px;top:-1px;line-height:19px;font-size:12.5px;color:#111">-3.51</div></div>
<div style="left:626px;top:897px;width:52px;height:6px;overflow:hidden"><div class="t" style="right:5px;top:-1px;line-height:19px;font-size:12.5px;color:#111">-0.01</div></div>
<div style="left:678px;top:897px;width:52px;height:6px;overflow:hidden"><div class="t" style="right:5px;top:-1px;line-height:19px;font-size:12.5px;color:#111">0.22</div></div>
<div style="left:574px;top:591px;width:1px;height:312px;background:#cdd2dc;opacity:0.9"></div>
<div style="left:626px;top:591px;width:1px;height:312px;background:#cdd2dc;opacity:0.9"></div>
<div style="left:678px;top:591px;width:1px;height:312px;background:#cdd2dc;opacity:0.9"></div>
<div style="left:730px;top:591px;width:1px;height:312px;background:#cdd2dc;opacity:0.9"></div>
<div style="left:782px;top:591px;width:1px;height:312px;background:#cdd2dc;opacity:0.9"></div>
<div style="left:834px;top:591px;width:1px;height:312px;background:#cdd2dc;opacity:0.9"></div>
<div style="left:886px;top:591px;width:1px;height:312px;background:#cdd2dc;opacity:0.9"></div>
<div style="left:943px;top:612px;width:17px;height:291px;background:#d6dce8"></div>
<div style="left:947px;top:789px;width:9px;height:24px;background:#9aa4b6"></div>
<svg style="left:943px;top:612px" width="17" height="291"><path d="M4 12 L8.5 7.5 L13 12 Z" fill="#6a7590"/><path d="M4 279 L13 279 L8.5 283.5 Z" fill="#6a7590"/></svg>
<div style="left:405px;top:841px;width:53px;height:18px;background:#faeab0"></div>
<div style="left:454px;top:843px;width:1px;height:14px;background:#111"></div>
<div style="left:11px;top:917px;width:951px;height:25px;background:#d1d7e4"></div>
<div class="t" style="left:19px;top:921.0px;height:16px;line-height:16px;font-size:12.5px">Trade Analysis</div>
<div style="left:105px;top:920px;width:150px;height:19px;background:#fff;border:1px solid #a8b2c2"></div>
<div class="t" style="left:110px;top:921.5px;height:16px;line-height:16px;font-size:12.5px;color:#111">Combined</div>
<svg style="left:241px;top:925px" width="10" height="8"><path d="M1 2 L9 2 L5 6 Z" fill="#666"/></svg>
<div style="left:263px;top:920px;width:80px;height:19px;background:#fff;border:1px solid #a8b2c2"></div>
<div class="t" style="left:268px;top:921.5px;height:16px;line-height:16px;font-size:12.5px;color:#111">Auto</div>
<svg style="left:329px;top:925px" width="10" height="8"><path d="M1 2 L9 2 L5 6 Z" fill="#666"/></svg>
<div style="left:818px;top:922px;width:13px;height:13px;background:#fff;border:1px solid #8a94a8"></div>
<div class="t" style="left:835px;top:921.0px;height:16px;line-height:16px;font-size:12.5px">Ignore Today's Trades</div>
<div style="left:13px;top:943px;width:950px;height:59px;border:1px solid #a3adbf;background:#fff"></div>
<div style="left:14px;top:944px;width:948px;height:19px;background:#f7f8fc"></div>
<div style="left:14px;top:963px;width:948px;height:1px;background:#cdd2dc"></div>
<div style="left:14px;top:982px;width:948px;height:1px;background:#cdd2dc"></div>
<div style="left:85px;top:944px;width:1px;height:57px;background:#cdd2dc"></div>
<div style="left:157px;top:944px;width:1px;height:57px;background:#cdd2dc"></div>
<div style="left:229px;top:944px;width:1px;height:57px;background:#cdd2dc"></div>
<div style="left:301px;top:944px;width:1px;height:57px;background:#cdd2dc"></div>
<div style="left:373px;top:944px;width:1px;height:57px;background:#cdd2dc"></div>
<div style="left:445px;top:944px;width:1px;height:57px;background:#cdd2dc"></div>
<div style="left:517px;top:944px;width:1px;height:57px;background:#cdd2dc"></div>
<div style="left:589px;top:944px;width:1px;height:57px;background:#cdd2dc"></div>
<div style="left:661px;top:944px;width:1px;height:57px;background:#cdd2dc"></div>
<div style="left:733px;top:944px;width:1px;height:57px;background:#cdd2dc"></div>
<div style="left:805px;top:944px;width:1px;height:57px;background:#cdd2dc"></div>
<div style="left:877px;top:944px;width:1px;height:57px;background:#cdd2dc"></div>
<div class="t" style="left:9.0px;top:944.5px;width:80px;height:16px;line-height:16px;text-align:center;font-size:12.5px">Analysis</div>
<div class="t" style="left:81.0px;top:944.5px;width:80px;height:16px;line-height:16px;text-align:center;font-size:12.5px">Margin</div>
<div class="t" style="left:153.0px;top:944.5px;width:80px;height:16px;line-height:16px;text-align:center;font-size:12.5px">Cost</div>
<div class="t" style="left:225.0px;top:944.5px;width:80px;height:16px;line-height:16px;text-align:center;font-size:12.5px">Curr Cost</div>
<div class="t" style="left:297.0px;top:944.5px;width:80px;height:16px;line-height:16px;text-align:center;font-size:12.5px">Commission</div>
<div class="t" style="left:369.0px;top:944.5px;width:80px;height:16px;line-height:16px;text-align:center;font-size:12.5px">PnL</div>
<div class="t" style="left:441.0px;top:944.5px;width:80px;height:16px;line-height:16px;text-align:center;font-size:12.5px">PnL%</div>
<div class="t" style="left:513.0px;top:944.5px;width:80px;height:16px;line-height:16px;text-align:center;font-size:12.5px">Delta</div>
<div class="t" style="left:585.0px;top:944.5px;width:80px;height:16px;line-height:16px;text-align:center;font-size:12.5px">Gamma</div>
<div class="t" style="left:657.0px;top:944.5px;width:80px;height:16px;line-height:16px;text-align:center;font-size:12.5px">Theta</div>
<div class="t" style="left:729.0px;top:944.5px;width:80px;height:16px;line-height:16px;text-align:center;font-size:12.5px">Vega</div>
<div class="t" style="left:801.0px;top:944.5px;width:80px;height:16px;line-height:16px;text-align:center;font-size:12.5px">T/D</div>
<div class="t" style="left:879.5px;top:944.5px;width:80px;height:16px;line-height:16px;text-align:center;font-size:12.5px">Plot</div>
<div style="left:16px;top:969.0px;width:9px;height:9px;border:1px solid #555;background:#fff"></div>
<svg style="left:16px;top:969.0px" width="9" height="9"><path d="M2 4.5 h5 M4.5 2 v5" stroke="#333" stroke-width="1"/></svg>
<div class="t" style="left:32px;top:965.5px;height:16px;line-height:16px;font-size:12.5px;color:#1a7ad8">Position</div>
<div class="t" style="left:-247px;top:965.5px;width:400px;height:16px;line-height:16px;text-align:right;font-size:12.5px;color:#111">600.40</div>
<div class="t" style="left:-175px;top:965.5px;width:400px;height:16px;line-height:16px;text-align:right;font-size:12.5px;color:#111">1,026.60</div>
<div class="t" style="left:-103px;top:965.5px;width:400px;height:16px;line-height:16px;text-align:right;font-size:12.5px;color:#111">-1,505.00</div>
<div class="t" style="left:-31px;top:965.5px;width:400px;height:16px;line-height:16px;text-align:right;font-size:12.5px;color:#111">3.40</div>
<div class="t" style="left:41px;top:965.5px;width:400px;height:16px;line-height:16px;text-align:right;font-size:12.5px;color:#ee1c24">-478.40</div>
<div class="t" style="left:113px;top:965.5px;width:400px;height:16px;line-height:16px;text-align:right;font-size:12.5px;color:#ee1c24">-79.68%</div>
<div class="t" style="left:185px;top:965.5px;width:400px;height:16px;line-height:16px;text-align:right;font-size:12.5px;color:#111">-106.40</div>
<div class="t" style="left:257px;top:965.5px;width:400px;height:16px;line-height:16px;text-align:right;font-size:12.5px;color:#111">-19.56</div>
<div class="t" style="left:329px;top:965.5px;width:400px;height:16px;line-height:16px;text-align:right;font-size:12.5px;color:#111">11.97</div>
<div class="t" style="left:401px;top:965.5px;width:400px;height:16px;line-height:16px;text-align:right;font-size:12.5px;color:#111">-36.43</div>
<div class="t" style="left:473px;top:965.5px;width:400px;height:16px;line-height:16px;text-align:right;font-size:12.5px;color:#111">0.1</div>
<div style="left:913px;top:967.5px;width:13px;height:13px;background:#fff;border:1px solid #8a94a8"></div>
<svg style="left:913px;top:967.5px" width="13" height="13"><path d="M3 6.5 L5.5 9.5 L10.5 3" stroke="#4a5a78" stroke-width="1.3" fill="none"/></svg>
<div style="left:16px;top:988.0px;width:9px;height:9px;border:1px solid #555;background:#fff"></div>
<svg style="left:16px;top:988.0px" width="9" height="9"><path d="M2 4.5 h5 M4.5 2 v5" stroke="#333" stroke-width="1"/></svg>
<div class="t" style="left:32px;top:984.5px;height:16px;line-height:16px;font-size:12.5px;color:#0a8a0a">Model</div>
<div class="t" style="left:-247px;top:984.5px;width:400px;height:16px;line-height:16px;text-align:right;font-size:12.5px;color:#111">1,030.70</div>
<div class="t" style="left:-175px;top:984.5px;width:400px;height:16px;line-height:16px;text-align:right;font-size:12.5px;color:#111">1,064.80</div>
<div class="t" style="left:-103px;top:984.5px;width:400px;height:16px;line-height:16px;text-align:right;font-size:12.5px;color:#111">-1,550.00</div>
<div class="t" style="left:-31px;top:984.5px;width:400px;height:16px;line-height:16px;text-align:right;font-size:12.5px;color:#111">10.20</div>
<div class="t" style="left:41px;top:984.5px;width:400px;height:16px;line-height:16px;text-align:right;font-size:12.5px;color:#ee1c24">-485.20</div>
<div class="t" style="left:113px;top:984.5px;width:400px;height:16px;line-height:16px;text-align:right;font-size:12.5px;color:#ee1c24">-47.07%</div>
<div class="t" style="left:185px;top:984.5px;width:400px;height:16px;line-height:16px;text-align:right;font-size:12.5px;color:#111">-65.42</div>
<div class="t" style="left:257px;top:984.5px;width:400px;height:16px;line-height:16px;text-align:right;font-size:12.5px;color:#111">-22.99</div>
<div class="t" style="left:329px;top:984.5px;width:400px;height:16px;line-height:16px;text-align:right;font-size:12.5px;color:#111">15.54</div>
<div class="t" style="left:401px;top:984.5px;width:400px;height:16px;line-height:16px;text-align:right;font-size:12.5px;color:#111">-44.38</div>
<div class="t" style="left:473px;top:984.5px;width:400px;height:16px;line-height:16px;text-align:right;font-size:12.5px;color:#111">0.2</div>
<div style="left:913px;top:986.5px;width:13px;height:13px;background:#fff;border:1px solid #8a94a8"></div>
<svg style="left:913px;top:986.5px" width="13" height="13"><path d="M3 6.5 L5.5 9.5 L10.5 3" stroke="#4a5a78" stroke-width="1.3" fill="none"/></svg>
<svg style="left:965px;top:574px" width="8" height="20"><g fill="#6a7488"><rect x="1" y="1" width="1" height="1"/><rect x="5" y="1" width="1" height="1"/><rect x="3" y="3" width="1" height="1"/><rect x="7" y="3" width="1" height="1"/><rect x="1" y="5" width="1" height="1"/><rect x="5" y="5" width="1" height="1"/><rect x="3" y="7" width="1" height="1"/><rect x="7" y="7" width="1" height="1"/><rect x="1" y="9" width="1" height="1"/><rect x="5" y="9" width="1" height="1"/><rect x="3" y="11" width="1" height="1"/><rect x="7" y="11" width="1" height="1"/><rect x="1" y="13" width="1" height="1"/><rect x="5" y="13" width="1" height="1"/><rect x="3" y="15" width="1" height="1"/><rect x="7" y="15" width="1" height="1"/><rect x="1" y="17" width="1" height="1"/><rect x="5" y="17" width="1" height="1"/></g></svg>
<div style="left:974px;top:165px;width:933px;height:837px;border:1px solid #97a3b8;border-right:none;background:#d6dce8"></div>
<div style="left:1050px;top:190px;width:857px;height:1px;background:#a3aec0"></div>
<div class="t" style="left:986px;top:169.5px;height:16px;line-height:16px;font-size:12px">Risk Chart</div>
<div style="left:1050px;top:166px;width:82px;height:25px;background:#d0d6e3;border:1px solid #a3aec0"></div>
<div class="t" style="left:1061px;top:169.5px;height:16px;line-height:16px;font-size:12px">Price Chart</div>
<div style="left:1131px;top:166px;width:126px;height:25px;background:#d0d6e3;border:1px solid #a3aec0"></div>
<div class="t" style="left:1142px;top:169.5px;height:16px;line-height:16px;font-size:12px">Movement Analysis</div>
<div style="left:1256px;top:166px;width:68px;height:25px;background:#d0d6e3;border:1px solid #a3aec0"></div>
<div class="t" style="left:1267px;top:169.5px;height:16px;line-height:16px;font-size:12px">Volatility</div>
<div style="left:1323px;top:166px;width:162px;height:25px;background:#d0d6e3;border:1px solid #a3aec0"></div>
<div class="t" style="left:1334px;top:169.5px;height:16px;line-height:16px;font-size:12px">Statistics &amp; Fundamentals</div>
<div class="t" style="left:981px;top:196.0px;height:16px;line-height:16px;font-size:12.5px">Vol Adjust</div>
<div style="left:1042px;top:195px;width:53px;height:19px;background:#fff;border:1px solid #a8b2c2"></div>
<div class="t" style="left:676px;top:196.5px;width:400px;height:16px;line-height:16px;text-align:right;font-size:12.5px;color:#111">0</div>
<svg style="left:1081px;top:196px" width="12" height="17"><path d="M2 7 L6 3 L10 7 Z M2 10 L10 10 L6 14 Z" fill="#6a7590"/></svg>
<div class="t" style="left:1660px;top:196.0px;height:16px;line-height:16px;font-size:12.5px">Projection</div>
<div style="left:1720px;top:194px;width:180px;height:21px;background:#fff;border:1px solid #a8b2c2"></div>
<div class="t" style="left:1724.5px;top:196.5px;height:16px;line-height:16px;font-size:12.5px;color:#111">28/01/2026</div>
<svg style="left:1796px;top:200px" width="10" height="8"><path d="M1 2 L9 2 L5 6 Z" fill="#777"/></svg>
<div class="t" style="left:1815px;top:196.5px;height:16px;line-height:16px;font-size:12.5px;color:#111">T+0</div>
<div class="t" style="left:1845px;top:196.5px;height:16px;line-height:16px;font-size:12.5px;color:#111">2Ln</div>
<svg style="left:1869px;top:198px" width="28" height="12"><path d="M9 1.5 L3.5 6 L9 10.5 Z M19 1.5 L24.5 6 L19 10.5 Z" fill="#1d2236"/></svg>
<div style="left:975px;top:217px;width:931px;height:759px;background:#fff"></div>
<div style="left:975px;top:976px;width:931px;height:25px;background:#283551"></div>
<div class="t" style="left:1734px;top:980.5px;height:16px;line-height:16px;font-size:12.5px;color:#f4f6fb">55%</div>
<svg style="left:1765px;top:978px" width="140" height="22" viewBox="0 0 140 22">
<path d="M5 10.5 h7" stroke="#e8ecf4" stroke-width="1.2"/>
<path d="M18 10.5 h98" stroke="#e8ecf4" stroke-width="1.2"/><path d="M18 10.5 h16" stroke="#f0e0a0" stroke-width="1.2"/>
<path d="M67.5 6 v9" stroke="#e8ecf4" stroke-width="1.2"/>
<rect x="34" y="4" width="4" height="12" fill="#fbeeb0"/>
<path d="M122 10.5 h8 M126 6.5 v8" stroke="#e8ecf4" stroke-width="1.2"/></svg>
<svg style="left:975px;top:217px" width="931" height="759" viewBox="975 217 931 759" font-family="Liberation Sans">
<rect x="1328.7" y="235.5" width="114.9" height="531.2" fill="#92cddc"/>
<rect x="1357.3" y="235.5" width="57.7" height="531.2" fill="#4f81bd"/>
<g fill="#dedede"><rect x="1026" y="235" width="831" height="1"/><rect x="1026" y="268" width="831" height="1"/><rect x="1026" y="301" width="831" height="1"/><rect x="1026" y="335" width="831" height="1"/><rect x="1026" y="368" width="831" height="1"/><rect x="1026" y="401" width="831" height="1"/><rect x="1026" y="434" width="831" height="1"/><rect x="1026" y="467" width="831" height="1"/><rect x="1026" y="500" width="831" height="1"/><rect x="1026" y="534" width="831" height="1"/><rect x="1026" y="567" width="831" height="1"/><rect x="1026" y="600" width="831" height="1"/><rect x="1026" y="633" width="831" height="1"/><rect x="1026" y="666" width="831" height="1"/><rect x="1026" y="700" width="831" height="1"/><rect x="1026" y="733" width="831" height="1"/><rect x="1026" y="766" width="831" height="1"/><rect x="1128" y="231" width="1" height="540"/><rect x="1247" y="231" width="1" height="540"/><rect x="1366" y="231" width="1" height="540"/><rect x="1485" y="231" width="1" height="540"/><rect x="1605" y="231" width="1" height="540"/><rect x="1724" y="231" width="1" height="540"/><rect x="1843" y="231" width="1" height="540"/><rect x="1030" y="235" width="1" height="532"/><rect x="1851" y="235" width="1" height="532"/></g>
<rect x="1030" y="335" width="822" height="1" fill="#000"/>
<path d="M1175.5 236 V766" stroke="#8c0a9c" stroke-width="1" stroke-dasharray="4,3"/>
<path d="M1581.5 236 V766" stroke="#8c0a9c" stroke-width="1" stroke-dasharray="4,3"/>
<text transform="translate(1339.2,266) rotate(-90)" font-size="11" fill="#4f81bd">58.40</text>
<text transform="translate(1367.8,266) rotate(-90)" font-size="11" fill="#a8d4e6">59.60</text>
<text transform="translate(1413.0,266) rotate(-90)" font-size="11" fill="#a8d4e6">62.02</text>
<text transform="translate(1441.6,266) rotate(-90)" font-size="11" fill="#4f81bd">63.22</text>
<text transform="translate(1173.2,765) rotate(-90)" font-size="11" fill="#8a1a9a">51.96</text>
<text transform="translate(1579.6,765) rotate(-90)" font-size="11" fill="#8a1a9a">69.01</text>
<text x="1128.5" y="229" font-size="11" fill="#111" text-anchor="middle">-17.8%</text>
<text x="1247.7" y="229" font-size="11" fill="#111" text-anchor="middle">-9.6%</text>
<text x="1366.8" y="229" font-size="11" fill="#111" text-anchor="middle">-1.3%</text>
<text x="1486.0" y="229" font-size="11" fill="#111" text-anchor="middle">6.9%</text>
<text x="1605.2" y="229" font-size="11" fill="#111" text-anchor="middle">15.1%</text>
<text x="1724.3" y="229" font-size="11" fill="#111" text-anchor="middle">23.3%</text>
<text x="1843.5" y="229" font-size="11" fill="#111" text-anchor="middle">31.6%</text>
<rect x="1417.5" y="217.5" width="29" height="15" fill="#fff" stroke="#2a3a50" stroke-width="1"/>
<text x="1432" y="229" font-size="11" fill="#111" text-anchor="middle">3.2%</text>
<text x="1024" y="239.5" font-size="11" fill="#111" text-anchor="end">250%</text>
<text x="1859" y="239.5" font-size="11" fill="#111">1,500</text>
<text x="1024" y="272.5" font-size="11" fill="#111" text-anchor="end">167%</text>
<text x="1859" y="272.5" font-size="11" fill="#111">1,000</text>
<text x="1024" y="305.5" font-size="11" fill="#111" text-anchor="end">83%</text>
<text x="1859" y="305.5" font-size="11" fill="#111">500</text>
<text x="1024" y="339.5" font-size="11" fill="#111" text-anchor="end">0%</text>
<text x="1859" y="339.5" font-size="11" fill="#111">0</text>
<text x="1024" y="405.5" font-size="11" fill="#111" text-anchor="end">-167%</text>
<text x="1859" y="405.5" font-size="11" fill="#111">-1,000</text>
<text x="1024" y="438.5" font-size="11" fill="#111" text-anchor="end">-250%</text>
<text x="1859" y="438.5" font-size="11" fill="#111">-1,500</text>
<text x="1024" y="471.5" font-size="11" fill="#111" text-anchor="end">-333%</text>
<text x="1859" y="471.5" font-size="11" fill="#111">-2,000</text>
<text x="1024" y="504.5" font-size="11" fill="#111" text-anchor="end">-416%</text>
<text x="1859" y="504.5" font-size="11" fill="#111">-2,500</text>
<text x="1024" y="538.5" font-size="11" fill="#111" text-anchor="end">-500%</text>
<text x="1859" y="538.5" font-size="11" fill="#111">-3,000</text>
<text x="1024" y="571.5" font-size="11" fill="#111" text-anchor="end">-583%</text>
<text x="1859" y="571.5" font-size="11" fill="#111">-3,500</text>
<text x="1024" y="604.5" font-size="11" fill="#111" text-anchor="end">-666%</text>
<text x="1859" y="604.5" font-size="11" fill="#111">-4,000</text>
<text x="1024" y="637.5" font-size="11" fill="#111" text-anchor="end">-750%</text>
<text x="1859" y="637.5" font-size="11" fill="#111">-4,500</text>
<text x="1024" y="670.5" font-size="11" fill="#111" text-anchor="end">-833%</text>
<text x="1859" y="670.5" font-size="11" fill="#111">-5,000</text>
<text x="1024" y="704.5" font-size="11" fill="#111" text-anchor="end">-916%</text>
<text x="1859" y="704.5" font-size="11" fill="#111">-5,500</text>
<text x="1024" y="737.5" font-size="11" fill="#111" text-anchor="end">-999%</text>
<text x="1859" y="737.5" font-size="11" fill="#111">-6,000</text>
<text x="1024" y="770.5" font-size="11" fill="#111" text-anchor="end">-1083%</text>
<text x="1859" y="770.5" font-size="11" fill="#111">-6,500</text>
<text x="1128.5" y="783" font-size="11" fill="#111" text-anchor="middle">50</text>
<text x="1247.5" y="783" font-size="11" fill="#111" text-anchor="middle">55</text>
<text x="1366.5" y="783" font-size="11" fill="#111" text-anchor="middle">60</text>
<text x="1485.5" y="783" font-size="11" fill="#111" text-anchor="middle">65</text>
<text x="1605.5" y="783" font-size="11" fill="#111" text-anchor="middle">70</text>
<text x="1724.5" y="783" font-size="11" fill="#111" text-anchor="middle">75</text>
<text x="1843.5" y="783" font-size="11" fill="#111" text-anchor="middle">80</text>
<g fill="none" stroke-linejoin="round">
<polyline points="1031.0,522.2 1034.0,518.4 1037.0,514.7 1040.0,511.0 1043.0,507.3 1046.0,503.6 1049.0,499.9 1052.0,496.2 1055.0,492.5 1058.0,488.9 1061.0,485.2 1064.0,481.6 1067.0,477.9 1070.0,474.3 1073.0,470.8 1076.0,467.2 1079.0,463.6 1082.0,460.1 1085.0,456.6 1088.0,453.1 1091.0,449.7 1094.0,446.2 1097.0,442.8 1100.0,439.5 1103.0,436.1 1106.0,432.8 1109.0,429.5 1112.0,426.3 1115.0,423.1 1118.0,419.9 1121.0,416.7 1124.0,413.6 1127.0,410.5 1130.0,407.5 1133.0,404.5 1136.0,401.6 1139.0,398.6 1142.0,395.8 1145.0,392.9 1148.0,390.1 1151.0,387.4 1154.0,384.7 1157.0,382.0 1160.0,379.4 1163.0,376.8 1166.0,374.3 1169.0,371.8 1172.0,369.3 1175.0,366.9 1178.0,364.6 1181.0,362.3 1184.0,360.0 1187.0,357.8 1190.0,355.7 1193.0,353.6 1196.0,351.5 1199.0,349.5 1202.0,347.6 1205.0,345.6 1208.0,343.8 1211.0,342.0 1214.0,340.2 1217.0,338.5 1220.0,336.9 1223.0,335.2 1226.0,333.7 1229.0,332.2 1232.0,330.7 1235.0,329.3 1238.0,328.0 1241.0,326.6 1244.0,325.4 1247.0,324.2 1250.0,323.0 1253.0,321.9 1256.0,320.9 1259.0,319.9 1262.0,318.9 1265.0,318.0 1268.0,317.1 1271.0,316.3 1274.0,315.5 1277.0,314.8 1280.0,314.2 1283.0,313.5 1286.0,313.0 1289.0,312.4 1292.0,312.0 1295.0,311.5 1298.0,311.2 1301.0,310.8 1304.0,310.5 1307.0,310.3 1310.0,310.1 1313.0,309.9 1316.0,309.8 1319.0,309.7 1322.0,309.7 1325.0,309.7 1328.0,309.8 1331.0,309.9 1334.0,310.0 1337.0,310.2 1340.0,310.5 1343.0,310.7 1346.0,311.1 1349.0,311.4 1352.0,311.8 1355.0,312.3 1358.0,312.7 1361.0,313.3 1364.0,313.8 1367.0,314.4 1370.0,315.1 1373.0,315.7 1376.0,316.5 1379.0,317.2 1382.0,318.0 1385.0,318.9 1388.0,319.7 1391.0,320.6 1394.0,321.6 1397.0,322.6 1400.0,323.6 1403.0,324.6 1406.0,325.7 1409.0,326.8 1412.0,328.0 1415.0,329.2 1418.0,330.4 1421.0,331.7 1424.0,333.0 1427.0,334.3 1430.0,335.6 1433.0,337.0 1436.0,338.4 1439.0,339.9 1442.0,341.4 1445.0,342.9 1448.0,344.4 1451.0,346.0 1454.0,347.6 1457.0,349.2 1460.0,350.8 1463.0,352.5 1466.0,354.2 1469.0,355.9 1472.0,357.7 1475.0,359.4 1478.0,361.2 1481.0,363.1 1484.0,364.9 1487.0,366.8 1490.0,368.7 1493.0,370.6 1496.0,372.5 1499.0,374.5 1502.0,376.5 1505.0,378.5 1508.0,380.5 1511.0,382.5 1514.0,384.6 1517.0,386.6 1520.0,388.7 1523.0,390.8 1526.0,392.9 1529.0,395.1 1532.0,397.2 1535.0,399.4 1538.0,401.6 1541.0,403.7 1544.0,406.0 1547.0,408.2 1550.0,410.4 1553.0,412.6 1556.0,414.9 1559.0,417.2 1562.0,419.4 1565.0,421.7 1568.0,424.0 1571.0,426.3 1574.0,428.6 1577.0,430.9 1580.0,433.2 1583.0,435.6 1586.0,437.9 1589.0,440.2 1592.0,442.6 1595.0,444.9 1598.0,447.3 1601.0,449.6 1604.0,452.0 1607.0,454.3 1610.0,456.7 1613.0,459.1 1616.0,461.4 1619.0,463.8 1622.0,466.2 1625.0,468.5 1628.0,470.9 1631.0,473.3 1634.0,475.6 1637.0,478.0 1640.0,480.4 1643.0,482.7 1646.0,485.1 1649.0,487.5 1652.0,489.8 1655.0,492.2 1658.0,494.5 1661.0,496.8 1664.0,499.2 1667.0,501.5 1670.0,503.8 1673.0,506.2 1676.0,508.5 1679.0,510.8 1682.0,513.1 1685.0,515.4 1688.0,517.7 1691.0,520.0 1694.0,522.2 1697.0,524.5 1700.0,526.8 1703.0,529.0 1706.0,531.3 1709.0,533.5 1712.0,535.7 1715.0,537.9 1718.0,540.1 1721.0,542.3 1724.0,544.5 1727.0,546.7 1730.0,548.9 1733.0,551.0 1736.0,553.2 1739.0,555.3 1742.0,557.5 1745.0,559.6 1748.0,561.7 1751.0,563.8 1754.0,565.9 1757.0,567.9 1760.0,570.0 1763.0,572.1 1766.0,574.1 1769.0,576.1 1772.0,578.2 1775.0,580.2 1778.0,582.2 1781.0,584.2 1784.0,586.1 1787.0,588.1 1790.0,590.1 1793.0,592.0 1796.0,593.9 1799.0,595.8 1802.0,597.8 1805.0,599.7 1808.0,601.5 1811.0,603.4 1814.0,605.3 1817.0,607.1 1820.0,609.0 1823.0,610.8 1826.0,612.6 1829.0,614.4 1832.0,616.2 1835.0,618.0 1838.0,619.8 1841.0,621.6 1844.0,623.3 1847.0,625.1 1850.0,626.8" stroke="#ff2020" stroke-width="1.1"/>
<polyline points="1031.0,583.2 1034.0,579.5 1037.0,575.9 1040.0,572.2 1043.0,568.5 1046.0,564.8 1049.0,561.1 1052.0,557.4 1055.0,553.7 1058.0,550.0 1061.0,546.2 1064.0,542.5 1067.0,538.8 1070.0,535.0 1073.0,531.3 1076.0,527.5 1079.0,523.8 1082.0,520.1 1085.0,516.3 1088.0,512.6 1091.0,508.9 1094.0,505.2 1097.0,501.5 1100.0,497.8 1103.0,494.1 1106.0,490.5 1109.0,486.8 1112.0,483.2 1115.0,479.6 1118.0,476.0 1121.0,472.4 1124.0,468.9 1127.0,465.3 1130.0,461.8 1133.0,458.4 1136.0,454.9 1139.0,451.5 1142.0,448.1 1145.0,444.7 1148.0,441.4 1151.0,438.1 1154.0,434.8 1157.0,431.6 1160.0,428.4 1163.0,425.2 1166.0,422.1 1169.0,419.0 1172.0,415.9 1175.0,412.9 1178.0,409.9 1181.0,407.0 1184.0,404.1 1187.0,401.2 1190.0,398.4 1193.0,395.6 1196.0,392.9 1199.0,390.2 1202.0,387.5 1205.0,384.9 1208.0,382.4 1211.0,379.9 1214.0,377.4 1217.0,375.0 1220.0,372.6 1223.0,370.3 1226.0,368.0 1229.0,365.8 1232.0,363.6 1235.0,361.5 1238.0,359.4 1241.0,357.4 1244.0,355.4 1247.0,353.5 1250.0,351.6 1253.0,349.8 1256.0,348.0 1259.0,346.3 1262.0,344.6 1265.0,343.0 1268.0,341.4 1271.0,339.9 1274.0,338.4 1277.0,337.0 1280.0,335.6 1283.0,334.3 1286.0,333.0 1289.0,331.8 1292.0,330.6 1295.0,329.5 1298.0,328.4 1301.0,327.4 1304.0,326.5 1307.0,325.5 1310.0,324.7 1313.0,323.8 1316.0,323.1 1319.0,322.4 1322.0,321.7 1325.0,321.1 1328.0,320.5 1331.0,320.0 1334.0,319.5 1337.0,319.1 1340.0,318.7 1343.0,318.4 1346.0,318.1 1349.0,317.9 1352.0,317.7 1355.0,317.6 1358.0,317.5 1361.0,317.5 1364.0,317.5 1367.0,317.5 1370.0,317.6 1373.0,317.8 1376.0,318.0 1379.0,318.2 1382.0,318.5 1385.0,318.8 1388.0,319.2 1391.0,319.6 1394.0,320.0 1397.0,320.6 1400.0,321.1 1403.0,321.7 1406.0,322.3 1409.0,323.0 1412.0,323.7 1415.0,324.4 1418.0,325.2 1421.0,326.1 1424.0,326.9 1427.0,327.9 1430.0,328.8 1433.0,329.8 1436.0,330.8 1439.0,331.9 1442.0,333.0 1445.0,334.1 1448.0,335.3 1451.0,336.5 1454.0,337.7 1457.0,339.0 1460.0,340.3 1463.0,341.6 1466.0,343.0 1469.0,344.4 1472.0,345.9 1475.0,347.3 1478.0,348.8 1481.0,350.4 1484.0,351.9 1487.0,353.5 1490.0,355.1 1493.0,356.8 1496.0,358.4 1499.0,360.1 1502.0,361.9 1505.0,363.6 1508.0,365.4 1511.0,367.2 1514.0,369.0 1517.0,370.9 1520.0,372.7 1523.0,374.6 1526.0,376.5 1529.0,378.5 1532.0,380.4 1535.0,382.4 1538.0,384.4 1541.0,386.4 1544.0,388.4 1547.0,390.5 1550.0,392.5 1553.0,394.6 1556.0,396.7 1559.0,398.8 1562.0,400.9 1565.0,403.1 1568.0,405.2 1571.0,407.4 1574.0,409.6 1577.0,411.8 1580.0,413.9 1583.0,416.2 1586.0,418.4 1589.0,420.6 1592.0,422.8 1595.0,425.1 1598.0,427.3 1601.0,429.6 1604.0,431.8 1607.0,434.1 1610.0,436.3 1613.0,438.6 1616.0,440.9 1619.0,443.2 1622.0,445.4 1625.0,447.7 1628.0,450.0 1631.0,452.3 1634.0,454.6 1637.0,456.9 1640.0,459.2 1643.0,461.5 1646.0,463.8 1649.0,466.1 1652.0,468.4 1655.0,470.7 1658.0,473.0 1661.0,475.2 1664.0,477.5 1667.0,479.8 1670.0,482.1 1673.0,484.4 1676.0,486.7 1679.0,488.9 1682.0,491.2 1685.0,493.5 1688.0,495.8 1691.0,498.0 1694.0,500.3 1697.0,502.5 1700.0,504.8 1703.0,507.0 1706.0,509.2 1709.0,511.5 1712.0,513.7 1715.0,515.9 1718.0,518.1 1721.0,520.3 1724.0,522.5 1727.0,524.7 1730.0,526.9 1733.0,529.1 1736.0,531.2 1739.0,533.4 1742.0,535.5 1745.0,537.7 1748.0,539.8 1751.0,541.9 1754.0,544.1 1757.0,546.2 1760.0,548.3 1763.0,550.4 1766.0,552.4 1769.0,554.5 1772.0,556.6 1775.0,558.6 1778.0,560.7 1781.0,562.7 1784.0,564.8 1787.0,566.8 1790.0,568.8 1793.0,570.8 1796.0,572.8 1799.0,574.8 1802.0,576.8 1805.0,578.7 1808.0,580.7 1811.0,582.6 1814.0,584.6 1817.0,586.5 1820.0,588.4 1823.0,590.3 1826.0,592.2 1829.0,594.1 1832.0,596.0 1835.0,597.9 1838.0,599.8 1841.0,601.6 1844.0,603.5 1847.0,605.3 1850.0,607.2" stroke="#ff2020" stroke-width="1.1"/>
<polyline points="1031.0,499.7 1034.0,497.1 1037.0,494.6 1040.0,492.0 1043.0,489.4 1046.0,486.8 1049.0,484.3 1052.0,481.7 1055.0,479.2 1058.0,476.7 1061.0,474.2 1064.0,471.7 1067.0,469.2 1070.0,466.7 1073.0,464.2 1076.0,461.8 1079.0,459.3 1082.0,456.9 1085.0,454.5 1088.0,452.1 1091.0,449.8 1094.0,447.4 1097.0,445.1 1100.0,442.8 1103.0,440.5 1106.0,438.2 1109.0,436.0 1112.0,433.7 1115.0,431.5 1118.0,429.3 1121.0,427.2 1124.0,425.0 1127.0,422.9 1130.0,420.8 1133.0,418.7 1136.0,416.7 1139.0,414.7 1142.0,412.7 1145.0,410.7 1148.0,408.8 1151.0,406.9 1154.0,405.0 1157.0,403.2 1160.0,401.3 1163.0,399.5 1166.0,397.8 1169.0,396.0 1172.0,394.3 1175.0,392.6 1178.0,391.0 1181.0,389.4 1184.0,387.8 1187.0,386.2 1190.0,384.7 1193.0,383.2 1196.0,381.7 1199.0,380.3 1202.0,378.9 1205.0,377.5 1208.0,376.2 1211.0,374.9 1214.0,373.6 1217.0,372.4 1220.0,371.2 1223.0,370.0 1226.0,368.9 1229.0,367.8 1232.0,366.7 1235.0,365.7 1238.0,364.7 1241.0,363.7 1244.0,362.8 1247.0,361.9 1250.0,361.0 1253.0,360.1 1256.0,359.3 1259.0,358.6 1262.0,357.8 1265.0,357.1 1268.0,356.5 1271.0,355.8 1274.0,355.2 1277.0,354.6 1280.0,354.1 1283.0,353.6 1286.0,353.1 1289.0,352.7 1292.0,352.3 1295.0,351.9 1298.0,351.6 1301.0,351.2 1304.0,351.0 1307.0,350.7 1310.0,350.5 1313.0,350.3 1316.0,350.2 1319.0,350.1 1322.0,350.0 1325.0,349.9 1328.0,349.9 1331.0,349.9 1334.0,349.9 1337.0,350.0 1340.0,350.1 1343.0,350.2 1346.0,350.3 1349.0,350.5 1352.0,350.7 1355.0,351.0 1358.0,351.2 1361.0,351.5 1364.0,351.8 1367.0,352.2 1370.0,352.6 1373.0,353.0 1376.0,353.4 1379.0,353.9 1382.0,354.4 1385.0,354.9 1388.0,355.4 1391.0,356.0 1394.0,356.6 1397.0,357.2 1400.0,357.8 1403.0,358.5 1406.0,359.2 1409.0,359.9 1412.0,360.6 1415.0,361.4 1418.0,362.2 1421.0,363.0 1424.0,363.8 1427.0,364.7 1430.0,365.5 1433.0,366.4 1436.0,367.3 1439.0,368.3 1442.0,369.2 1445.0,370.2 1448.0,371.2 1451.0,372.2 1454.0,373.3 1457.0,374.3 1460.0,375.4 1463.0,376.5 1466.0,377.6 1469.0,378.8 1472.0,379.9 1475.0,381.1 1478.0,382.3 1481.0,383.5 1484.0,384.7 1487.0,385.9 1490.0,387.1 1493.0,388.4 1496.0,389.7 1499.0,391.0 1502.0,392.3 1505.0,393.6 1508.0,394.9 1511.0,396.3 1514.0,397.7 1517.0,399.0 1520.0,400.4 1523.0,401.8 1526.0,403.2 1529.0,404.6 1532.0,406.1 1535.0,407.5 1538.0,409.0 1541.0,410.4 1544.0,411.9 1547.0,413.4 1550.0,414.9 1553.0,416.4 1556.0,417.9 1559.0,419.4 1562.0,421.0 1565.0,422.5 1568.0,424.0 1571.0,425.6 1574.0,427.2 1577.0,428.7 1580.0,430.3 1583.0,431.9 1586.0,433.5 1589.0,435.0 1592.0,436.6 1595.0,438.2 1598.0,439.8 1601.0,441.5 1604.0,443.1 1607.0,444.7 1610.0,446.3 1613.0,447.9 1616.0,449.6 1619.0,451.2 1622.0,452.8 1625.0,454.5 1628.0,456.1 1631.0,457.7 1634.0,459.4 1637.0,461.0 1640.0,462.7 1643.0,464.3 1646.0,466.0 1649.0,467.6 1652.0,469.3 1655.0,470.9 1658.0,472.6 1661.0,474.2 1664.0,475.9 1667.0,477.5 1670.0,479.2 1673.0,480.8 1676.0,482.5 1679.0,484.1 1682.0,485.8 1685.0,487.4 1688.0,489.1 1691.0,490.7 1694.0,492.3 1697.0,494.0 1700.0,495.6 1703.0,497.2 1706.0,498.9 1709.0,500.5 1712.0,502.1 1715.0,503.7 1718.0,505.4 1721.0,507.0 1724.0,508.6 1727.0,510.2 1730.0,511.8 1733.0,513.4 1736.0,515.0 1739.0,516.6 1742.0,518.2 1745.0,519.8 1748.0,521.3 1751.0,522.9 1754.0,524.5 1757.0,526.0 1760.0,527.6 1763.0,529.2 1766.0,530.7 1769.0,532.3 1772.0,533.8 1775.0,535.3 1778.0,536.9 1781.0,538.4 1784.0,539.9 1787.0,541.4 1790.0,542.9 1793.0,544.4 1796.0,545.9 1799.0,547.4 1802.0,548.9 1805.0,550.4 1808.0,551.9 1811.0,553.3 1814.0,554.8 1817.0,556.2 1820.0,557.7 1823.0,559.1 1826.0,560.6 1829.0,562.0 1832.0,563.4 1835.0,564.8 1838.0,566.3 1841.0,567.7 1844.0,569.1 1847.0,570.5 1850.0,571.8" stroke="#ff0000" stroke-width="1.3"/>
<polyline points="1031.0,548.6 1034.0,546.0 1037.0,543.4 1040.0,540.8 1043.0,538.1 1046.0,535.5 1049.0,532.9 1052.0,530.3 1055.0,527.6 1058.0,525.0 1061.0,522.4 1064.0,519.8 1067.0,517.1 1070.0,514.5 1073.0,511.9 1076.0,509.3 1079.0,506.7 1082.0,504.1 1085.0,501.5 1088.0,499.0 1091.0,496.4 1094.0,493.8 1097.0,491.3 1100.0,488.8 1103.0,486.2 1106.0,483.7 1109.0,481.2 1112.0,478.7 1115.0,476.3 1118.0,473.8 1121.0,471.4 1124.0,468.9 1127.0,466.5 1130.0,464.1 1133.0,461.7 1136.0,459.4 1139.0,457.0 1142.0,454.7 1145.0,452.4 1148.0,450.1 1151.0,447.8 1154.0,445.6 1157.0,443.4 1160.0,441.2 1163.0,439.0 1166.0,436.9 1169.0,434.7 1172.0,432.6 1175.0,430.5 1178.0,428.5 1181.0,426.4 1184.0,424.4 1187.0,422.5 1190.0,420.5 1193.0,418.6 1196.0,416.7 1199.0,414.8 1202.0,413.0 1205.0,411.1 1208.0,409.4 1211.0,407.6 1214.0,405.9 1217.0,404.2 1220.0,402.5 1223.0,400.9 1226.0,399.3 1229.0,397.7 1232.0,396.1 1235.0,394.6 1238.0,393.1 1241.0,391.7 1244.0,390.3 1247.0,388.9 1250.0,387.5 1253.0,386.2 1256.0,384.9 1259.0,383.6 1262.0,382.4 1265.0,381.2 1268.0,380.0 1271.0,378.9 1274.0,377.8 1277.0,376.8 1280.0,375.7 1283.0,374.7 1286.0,373.8 1289.0,372.8 1292.0,371.9 1295.0,371.1 1298.0,370.2 1301.0,369.4 1304.0,368.7 1307.0,367.9 1310.0,367.3 1313.0,366.6 1316.0,366.0 1319.0,365.4 1322.0,364.8 1325.0,364.3 1328.0,363.8 1331.0,363.3 1334.0,362.9 1337.0,362.4 1340.0,362.1 1343.0,361.7 1346.0,361.4 1349.0,361.2 1352.0,360.9 1355.0,360.7 1358.0,360.5 1361.0,360.4 1364.0,360.3 1367.0,360.2 1370.0,360.1 1373.0,360.1 1376.0,360.1 1379.0,360.1 1382.0,360.2 1385.0,360.3 1388.0,360.4 1391.0,360.6 1394.0,360.8 1397.0,361.0 1400.0,361.2 1403.0,361.5 1406.0,361.8 1409.0,362.1 1412.0,362.5 1415.0,362.9 1418.0,363.3 1421.0,363.7 1424.0,364.2 1427.0,364.7 1430.0,365.2 1433.0,365.7 1436.0,366.3 1439.0,366.9 1442.0,367.5 1445.0,368.2 1448.0,368.9 1451.0,369.5 1454.0,370.3 1457.0,371.0 1460.0,371.8 1463.0,372.6 1466.0,373.4 1469.0,374.2 1472.0,375.1 1475.0,375.9 1478.0,376.8 1481.0,377.8 1484.0,378.7 1487.0,379.7 1490.0,380.6 1493.0,381.6 1496.0,382.7 1499.0,383.7 1502.0,384.8 1505.0,385.8 1508.0,386.9 1511.0,388.0 1514.0,389.2 1517.0,390.3 1520.0,391.5 1523.0,392.7 1526.0,393.9 1529.0,395.1 1532.0,396.3 1535.0,397.5 1538.0,398.8 1541.0,400.1 1544.0,401.4 1547.0,402.7 1550.0,404.0 1553.0,405.3 1556.0,406.6 1559.0,408.0 1562.0,409.3 1565.0,410.7 1568.0,412.1 1571.0,413.5 1574.0,414.9 1577.0,416.3 1580.0,417.8 1583.0,419.2 1586.0,420.6 1589.0,422.1 1592.0,423.6 1595.0,425.0 1598.0,426.5 1601.0,428.0 1604.0,429.5 1607.0,431.0 1610.0,432.5 1613.0,434.1 1616.0,435.6 1619.0,437.1 1622.0,438.6 1625.0,440.2 1628.0,441.7 1631.0,443.3 1634.0,444.8 1637.0,446.4 1640.0,448.0 1643.0,449.5 1646.0,451.1 1649.0,452.7 1652.0,454.3 1655.0,455.8 1658.0,457.4 1661.0,459.0 1664.0,460.6 1667.0,462.2 1670.0,463.8 1673.0,465.4 1676.0,467.0 1679.0,468.6 1682.0,470.2 1685.0,471.7 1688.0,473.3 1691.0,474.9 1694.0,476.5 1697.0,478.1 1700.0,479.7 1703.0,481.3 1706.0,482.9 1709.0,484.5 1712.0,486.1 1715.0,487.6 1718.0,489.2 1721.0,490.8 1724.0,492.4 1727.0,493.9 1730.0,495.5 1733.0,497.1 1736.0,498.6 1739.0,500.2 1742.0,501.7 1745.0,503.3 1748.0,504.8 1751.0,506.4 1754.0,507.9 1757.0,509.5 1760.0,511.0 1763.0,512.5 1766.0,514.0 1769.0,515.5 1772.0,517.0 1775.0,518.5 1778.0,520.0 1781.0,521.5 1784.0,523.0 1787.0,524.5 1790.0,525.9 1793.0,527.4 1796.0,528.9 1799.0,530.3 1802.0,531.8 1805.0,533.2 1808.0,534.6 1811.0,536.0 1814.0,537.4 1817.0,538.9 1820.0,540.3 1823.0,541.6 1826.0,543.0 1829.0,544.4 1832.0,545.8 1835.0,547.1 1838.0,548.5 1841.0,549.8 1844.0,551.2 1847.0,552.5 1850.0,553.8" stroke="#ff0000" stroke-width="1.3"/>
<polyline points="1031,603.6 1152,267 1533,267 1701,731 1852,731" stroke="#3c3cc0" stroke-width="2.4"/>
<polyline points="1031,728 1033.3,728 1199,264 1556,264 1724,727.5 1852,727.5" stroke="#108010" stroke-width="2.4"/>
</g>
<path d="M1413 360 L1438 369" stroke="#c8a080" stroke-width="8" stroke-opacity="0.7"/>
<circle cx="1432.5" cy="367.4" r="4.2" fill="#ff0000" stroke="#111" stroke-width="1.2"/>
<rect x="981" y="360" width="45" height="14" fill="#d40000"/><text x="1023" y="371.5" font-size="11.5" fill="#fff" text-anchor="end">-81%</text>
<rect x="1856" y="360" width="47" height="14" fill="#d40000"/><text x="1859" y="371.5" font-size="11.5" fill="#fff">-485</text>
<rect x="1035.5" y="240.5" width="160" height="196" rx="5" fill="#eaf0fa" fill-opacity="0.82" stroke="#6e7b91" stroke-width="1"/>
<rect x="1043.5" y="249.0" width="3.5" height="12" fill="#ff3030"/>
<text x="1047" y="259.0" font-size="11" fill="#555">-3.40 Realized PnL</text>
<rect x="1043.5" y="263.1" width="3.5" height="12" fill="#5ac85a"/>
<text x="1047" y="273.1" font-size="11" fill="#444">+1</text>
<text x="1063.5" y="273.1" font-size="11" fill="#4040e0">17mar. 67 Call Δ</text>
<text x="1188" y="273.1" font-size="11" fill="#4040e0" text-anchor="end">39,99</text>
<rect x="1043.5" y="277.2" width="3.5" height="12" fill="#5ac85a"/>
<text x="1047" y="287.2" font-size="11" fill="#444">-1</text>
<text x="1063.5" y="287.2" font-size="11" fill="#f04040">17mar. 68 Call Δ</text>
<text x="1185" y="287.2" font-size="11" fill="#f04040" text-anchor="end">37.11</text>
<rect x="1043.5" y="291.3" width="3.5" height="12" fill="#5ac85a"/>
<text x="1047" y="301.3" font-size="11" fill="#444">-1</text>
<text x="1063.5" y="301.3" font-size="11" fill="#f04040">17mar. 74 Call Δ</text>
<text x="1186" y="301.3" font-size="11" fill="#f04040" text-anchor="end">24.03</text>
<rect x="1043.5" y="305.4" width="3.5" height="12" fill="#5ac85a"/>
<text x="1047" y="315.4" font-size="11" fill="#444">+1</text>
<text x="1063.5" y="315.4" font-size="11" fill="#4040e0">17mar. 75 Call Δ</text>
<text x="1188" y="315.4" font-size="11" fill="#4040e0" text-anchor="end">22,43</text>
<rect x="1043.5" y="319.5" width="3.5" height="12" fill="#5ac85a"/>
<text x="1047" y="329.5" font-size="11" fill="#444">-1</text>
<text x="1063.5" y="329.5" font-size="11" fill="#f04040">17mar. 44 Put Δ</text>
<text x="1182" y="329.5" font-size="11" fill="#f04040" text-anchor="end">-2.95</text>
<rect x="1043.5" y="333.6" width="3.5" height="12" fill="#5ac85a"/>
<text x="1047" y="343.6" font-size="11" fill="#444">+1</text>
<text x="1063.5" y="343.6" font-size="11" fill="#4040e0">17mar. 51 Put Δ</text>
<text x="1185" y="343.6" font-size="11" fill="#4040e0" text-anchor="end">-8.24</text>
<rect x="1043.5" y="347.7" width="3.5" height="12" fill="#5ac85a"/>
<text x="1047" y="357.7" font-size="11" fill="#444">-1</text>
<text x="1063.5" y="357.7" font-size="11" fill="#f04040">17mar. 53 Put Δ</text>
<text x="1182" y="357.7" font-size="11" fill="#f04040" text-anchor="end">-11.90</text>
<rect x="1043.5" y="361.8" width="3.5" height="12" fill="#5ac85a"/>
<text x="1047" y="371.8" font-size="11" fill="#444">+1</text>
<text x="1063.5" y="371.8" font-size="11" fill="#4040e0">17mar. 46 Put Δ</text>
<text x="1184" y="371.8" font-size="11" fill="#4040e0" text-anchor="end">-3.77</text>
<rect x="1043.5" y="375.9" width="3.5" height="12" fill="#8aaaf0"/>
<text x="1047" y="385.9" font-size="11" fill="#444">+1</text>
<text x="1063.5" y="385.9" font-size="11" fill="#4040e0">17mar. 44 Put Δ</text>
<text x="1182" y="385.9" font-size="11" fill="#4040e0" text-anchor="end">-2.95</text>
<rect x="1043.5" y="390.0" width="3.5" height="12" fill="#8aaaf0"/>
<text x="1047" y="400.0" font-size="11" fill="#444">+1</text>
<text x="1063.5" y="400.0" font-size="11" fill="#4040e0">17mar. 74 Call Δ</text>
<text x="1186" y="400.0" font-size="11" fill="#4040e0" text-anchor="end">24.03</text>
<rect x="1043.5" y="404.1" width="3.5" height="12" fill="#8aaaf0"/>
<text x="1047" y="414.1" font-size="11" fill="#444">-1</text>
<text x="1063.5" y="414.1" font-size="11" fill="#f04040">17mar. 67 Call Δ</text>
<text x="1186" y="414.1" font-size="11" fill="#f04040" text-anchor="end">39.99</text>
<rect x="1043.5" y="418.2" width="3.5" height="12" fill="#8aaaf0"/>
<text x="1047" y="428.2" font-size="11" fill="#444">-1</text>
<text x="1063.5" y="428.2" font-size="11" fill="#f04040">17mar. 51 Put Δ</text>
<text x="1185" y="428.2" font-size="11" fill="#f04040" text-anchor="end">-8.24</text>
<rect x="1035.5" y="705.5" width="121" height="56" rx="5" fill="#eaf0fa" fill-opacity="0.82" stroke="#6e7b91" stroke-width="1"/>
<text x="1043" y="724" font-size="11" fill="#3a9a3a">17/03/2026 (0)</text>
<text x="1043" y="738" font-size="11" fill="#f06868">21/02/2026 (24) T+24</text>
<text x="1043" y="752" font-size="11" fill="#70e070">28/01/2026 (48) T+0</text>
<text x="1102" y="758" font-size="11" fill="#8a1a9a" text-anchor="middle">17.2%</text>
<text x="1378" y="758" font-size="11" fill="#8a1a9a" text-anchor="middle">53.1%</text>
<text x="1716" y="758" font-size="11" fill="#8a1a9a" text-anchor="middle">29.7%</text>
<rect x="979.5" y="788.5" width="922" height="182" rx="6" fill="#e8eef7" stroke="#556070" stroke-width="1"/>
<text x="1006" y="820" font-size="11.5" fill="#666" text-anchor="middle">PnL</text>
<text x="1880" y="820" font-size="11.5" fill="#666" text-anchor="middle">PnL</text>
<rect x="1031" y="816" width="158" height="5.2" fill="#f07c7c" stroke="#555" stroke-width="1"/>
<text x="1128.5" y="804" font-size="11" fill="#f06060" text-anchor="middle">-326%</text>
<text x="1128.5" y="815" font-size="11" fill="#f06060" text-anchor="middle">-1959</text>
<rect x="1189" y="816" width="120" height="2.0" fill="#f07c7c" stroke="#555" stroke-width="1"/>
<text x="1247.7" y="804" font-size="11" fill="#f06060" text-anchor="middle">-134%</text>
<text x="1247.7" y="815" font-size="11" fill="#f06060" text-anchor="middle">-806</text>
<rect x="1309" y="816" width="117" height="0.6" fill="#f07c7c" stroke="#555" stroke-width="1"/>
<text x="1366.8" y="804" font-size="11" fill="#f06060" text-anchor="middle">-67%</text>
<text x="1366.8" y="815" font-size="11" fill="#f06060" text-anchor="middle">-399</text>
<rect x="1426" y="816" width="120" height="2.7" fill="#f07c7c" stroke="#555" stroke-width="1"/>
<text x="1486.0" y="804" font-size="11" fill="#f06060" text-anchor="middle">-114%</text>
<text x="1486.0" y="815" font-size="11" fill="#f06060" text-anchor="middle">-684</text>
<rect x="1546" y="816" width="119" height="4.5" fill="#f07c7c" stroke="#555" stroke-width="1"/>
<text x="1605.2" y="804" font-size="11" fill="#f06060" text-anchor="middle">-237%</text>
<text x="1605.2" y="815" font-size="11" fill="#f06060" text-anchor="middle">-1420</text>
<rect x="1665" y="816" width="120" height="7.1" fill="#f07c7c" stroke="#555" stroke-width="1"/>
<text x="1724.3" y="804" font-size="11" fill="#f06060" text-anchor="middle">-391%</text>
<text x="1724.3" y="815" font-size="11" fill="#f06060" text-anchor="middle">-2346</text>
<rect x="1785" y="816" width="67" height="10.1" fill="#f07c7c" stroke="#555" stroke-width="1"/>
<text x="1843.5" y="804" font-size="11" fill="#f06060" text-anchor="middle">-543%</text>
<text x="1843.5" y="815" font-size="11" fill="#f06060" text-anchor="middle">-3262</text>
<path d="M1031 816 H1852" stroke="#555" stroke-width="1"/>
<text x="1006" y="861.5" font-size="11.5" fill="#666" text-anchor="middle">Delta</text>
<text x="1880" y="861.5" font-size="11.5" fill="#666" text-anchor="middle">Delta</text>
<rect x="1031" y="847.5" width="158" height="10.0" fill="#5a7cf6" stroke="#555" stroke-width="1"/>
<text x="1128.5" y="868.5" font-size="11" fill="#6068f0" text-anchor="middle">290.69</text>
<rect x="1189" y="852.5" width="120" height="5.0" fill="#5a7cf6" stroke="#555" stroke-width="1"/>
<text x="1247.7" y="868.5" font-size="11" fill="#6068f0" text-anchor="middle">159.46</text>
<rect x="1309" y="857.2" width="117" height="0.3" fill="#5a7cf6" stroke="#555" stroke-width="1"/>
<text x="1366.8" y="868.5" font-size="11" fill="#6068f0" text-anchor="middle">5.91</text>
<rect x="1426" y="857.5" width="120" height="3.5" fill="#f07c7c" stroke="#555" stroke-width="1"/>
<text x="1486.0" y="856.5" font-size="11" fill="#f06060" text-anchor="middle">-111.25</text>
<rect x="1546" y="857.5" width="119" height="6.0" fill="#f07c7c" stroke="#555" stroke-width="1"/>
<text x="1605.2" y="856.5" font-size="11" fill="#f06060" text-anchor="middle">-174.16</text>
<rect x="1665" y="857.5" width="120" height="6.6" fill="#f07c7c" stroke="#555" stroke-width="1"/>
<text x="1724.3" y="856.5" font-size="11" fill="#f06060" text-anchor="middle">-189.45</text>
<rect x="1785" y="857.5" width="67" height="6.0" fill="#f07c7c" stroke="#555" stroke-width="1"/>
<text x="1843.5" y="856.5" font-size="11" fill="#f06060" text-anchor="middle">-172.88</text>
<path d="M1031 857.5 H1852" stroke="#555" stroke-width="1"/>
<text x="1006" y="894" font-size="11.5" fill="#666" text-anchor="middle">Gamma</text>
<text x="1880" y="894" font-size="11.5" fill="#666" text-anchor="middle">Gamma</text>
<rect x="1031" y="890" width="158" height="6.0" fill="#f07c7c" stroke="#555" stroke-width="1"/>
<text x="1128.5" y="889" font-size="11" fill="#f06060" text-anchor="middle">-18.26</text>
<rect x="1189" y="890" width="120" height="9.5" fill="#f07c7c" stroke="#555" stroke-width="1"/>
<text x="1247.7" y="889" font-size="11" fill="#f06060" text-anchor="middle">-31.16</text>
<rect x="1309" y="890" width="117" height="8.5" fill="#f07c7c" stroke="#555" stroke-width="1"/>
<text x="1366.8" y="889" font-size="11" fill="#f06060" text-anchor="middle">-28.27</text>
<rect x="1426" y="890" width="120" height="5.7" fill="#f07c7c" stroke="#555" stroke-width="1"/>
<text x="1486.0" y="889" font-size="11" fill="#f06060" text-anchor="middle">-18.07</text>
<rect x="1546" y="890" width="119" height="2.0" fill="#f07c7c" stroke="#555" stroke-width="1"/>
<text x="1605.2" y="889" font-size="11" fill="#f06060" text-anchor="middle">-7.37</text>
<rect x="1665" y="889.6" width="120" height="0.4" fill="#5a7cf6" stroke="#555" stroke-width="1"/>
<text x="1724.3" y="901" font-size="11" fill="#6068f0" text-anchor="middle">0.70</text>
<rect x="1785" y="887.8" width="67" height="2.2" fill="#5a7cf6" stroke="#555" stroke-width="1"/>
<text x="1843.5" y="901" font-size="11" fill="#6068f0" text-anchor="middle">5.37</text>
<path d="M1031 890 H1852" stroke="#555" stroke-width="1"/>
<text x="1006" y="925.5" font-size="11.5" fill="#666" text-anchor="middle">Theta</text>
<text x="1880" y="925.5" font-size="11.5" fill="#666" text-anchor="middle">Theta</text>
<rect x="1031" y="921.3" width="158" height="0.2" fill="#5a7cf6" stroke="#555" stroke-width="1"/>
<text x="1128.5" y="932.5" font-size="11" fill="#6068f0" text-anchor="middle">0.04</text>
<rect x="1189" y="915.3" width="120" height="6.2" fill="#5a7cf6" stroke="#555" stroke-width="1"/>
<text x="1247.7" y="932.5" font-size="11" fill="#6068f0" text-anchor="middle">15.07</text>
<rect x="1309" y="912.9" width="117" height="8.6" fill="#5a7cf6" stroke="#555" stroke-width="1"/>
<text x="1366.8" y="932.5" font-size="11" fill="#6068f0" text-anchor="middle">18.56</text>
<rect x="1426" y="916.0" width="120" height="5.5" fill="#5a7cf6" stroke="#555" stroke-width="1"/>
<text x="1486.0" y="932.5" font-size="11" fill="#6068f0" text-anchor="middle">11.26</text>
<rect x="1546" y="921.5" width="119" height="0.7" fill="#f07c7c" stroke="#555" stroke-width="1"/>
<text x="1605.2" y="920.5" font-size="11" fill="#f06060" text-anchor="middle">-1.53</text>
<rect x="1665" y="921.5" width="120" height="6.1" fill="#f07c7c" stroke="#555" stroke-width="1"/>
<text x="1724.3" y="920.5" font-size="11" fill="#f06060" text-anchor="middle">-14.42</text>
<rect x="1785" y="921.5" width="67" height="10.1" fill="#f07c7c" stroke="#555" stroke-width="1"/>
<text x="1843.5" y="920.5" font-size="11" fill="#f06060" text-anchor="middle">-23.72</text>
<path d="M1031 921.5 H1852" stroke="#555" stroke-width="1"/>
<text x="1006" y="958.5" font-size="11.5" fill="#666" text-anchor="middle">Vega</text>
<text x="1880" y="958.5" font-size="11.5" fill="#666" text-anchor="middle">Vega</text>
<rect x="1031" y="954.5" width="158" height="3.0" fill="#f07c7c" stroke="#555" stroke-width="1"/>
<text x="1128.5" y="953.5" font-size="11" fill="#f06060" text-anchor="middle">-16.21</text>
<rect x="1189" y="954.5" width="120" height="8.5" fill="#f07c7c" stroke="#555" stroke-width="1"/>
<text x="1247.7" y="953.5" font-size="11" fill="#f06060" text-anchor="middle">-45.96</text>
<rect x="1309" y="954.5" width="117" height="9.5" fill="#f07c7c" stroke="#555" stroke-width="1"/>
<text x="1366.8" y="953.5" font-size="11" fill="#f06060" text-anchor="middle">-51.19</text>
<rect x="1426" y="954.5" width="120" height="6.1" fill="#f07c7c" stroke="#555" stroke-width="1"/>
<text x="1486.0" y="953.5" font-size="11" fill="#f06060" text-anchor="middle">-35.45</text>
<rect x="1546" y="954.5" width="119" height="1.9" fill="#f07c7c" stroke="#555" stroke-width="1"/>
<text x="1605.2" y="953.5" font-size="11" fill="#f06060" text-anchor="middle">-9.83</text>
<rect x="1665" y="951.3" width="120" height="3.2" fill="#5a7cf6" stroke="#555" stroke-width="1"/>
<text x="1724.3" y="965.5" font-size="11" fill="#6068f0" text-anchor="middle">15.66</text>
<rect x="1785" y="947.1" width="67" height="7.4" fill="#5a7cf6" stroke="#555" stroke-width="1"/>
<text x="1843.5" y="965.5" font-size="11" fill="#6068f0" text-anchor="middle">34.42</text>
<path d="M1031 954.5 H1852" stroke="#555" stroke-width="1"/>
<rect x="1407.5" y="771.5" width="49" height="199" rx="5" fill="#e8eef7" fill-opacity="0.86" stroke="#556070" stroke-width="1"/>
<text x="1432" y="783.2" font-size="11" fill="#111" text-anchor="middle">62.77</text>
<text x="1432" y="816.5" font-size="11.2" fill="#ff0000" text-anchor="middle">-485</text>
<text x="1432" y="831" font-size="11.2" fill="#ff0000" text-anchor="middle">-80.8%</text>
<text x="1432" y="863.4" font-size="11.2" fill="#ff0000" text-anchor="middle">-65.42</text>
<text x="1432" y="895" font-size="11.2" fill="#ff0000" text-anchor="middle">-22.99</text>
<text x="1432" y="927.3" font-size="11.2" fill="#0000ff" text-anchor="middle">15.54</text>
<text x="1432" y="959" font-size="11.2" fill="#ff0000" text-anchor="middle">-44.38</text>
</svg>
</body></html>
